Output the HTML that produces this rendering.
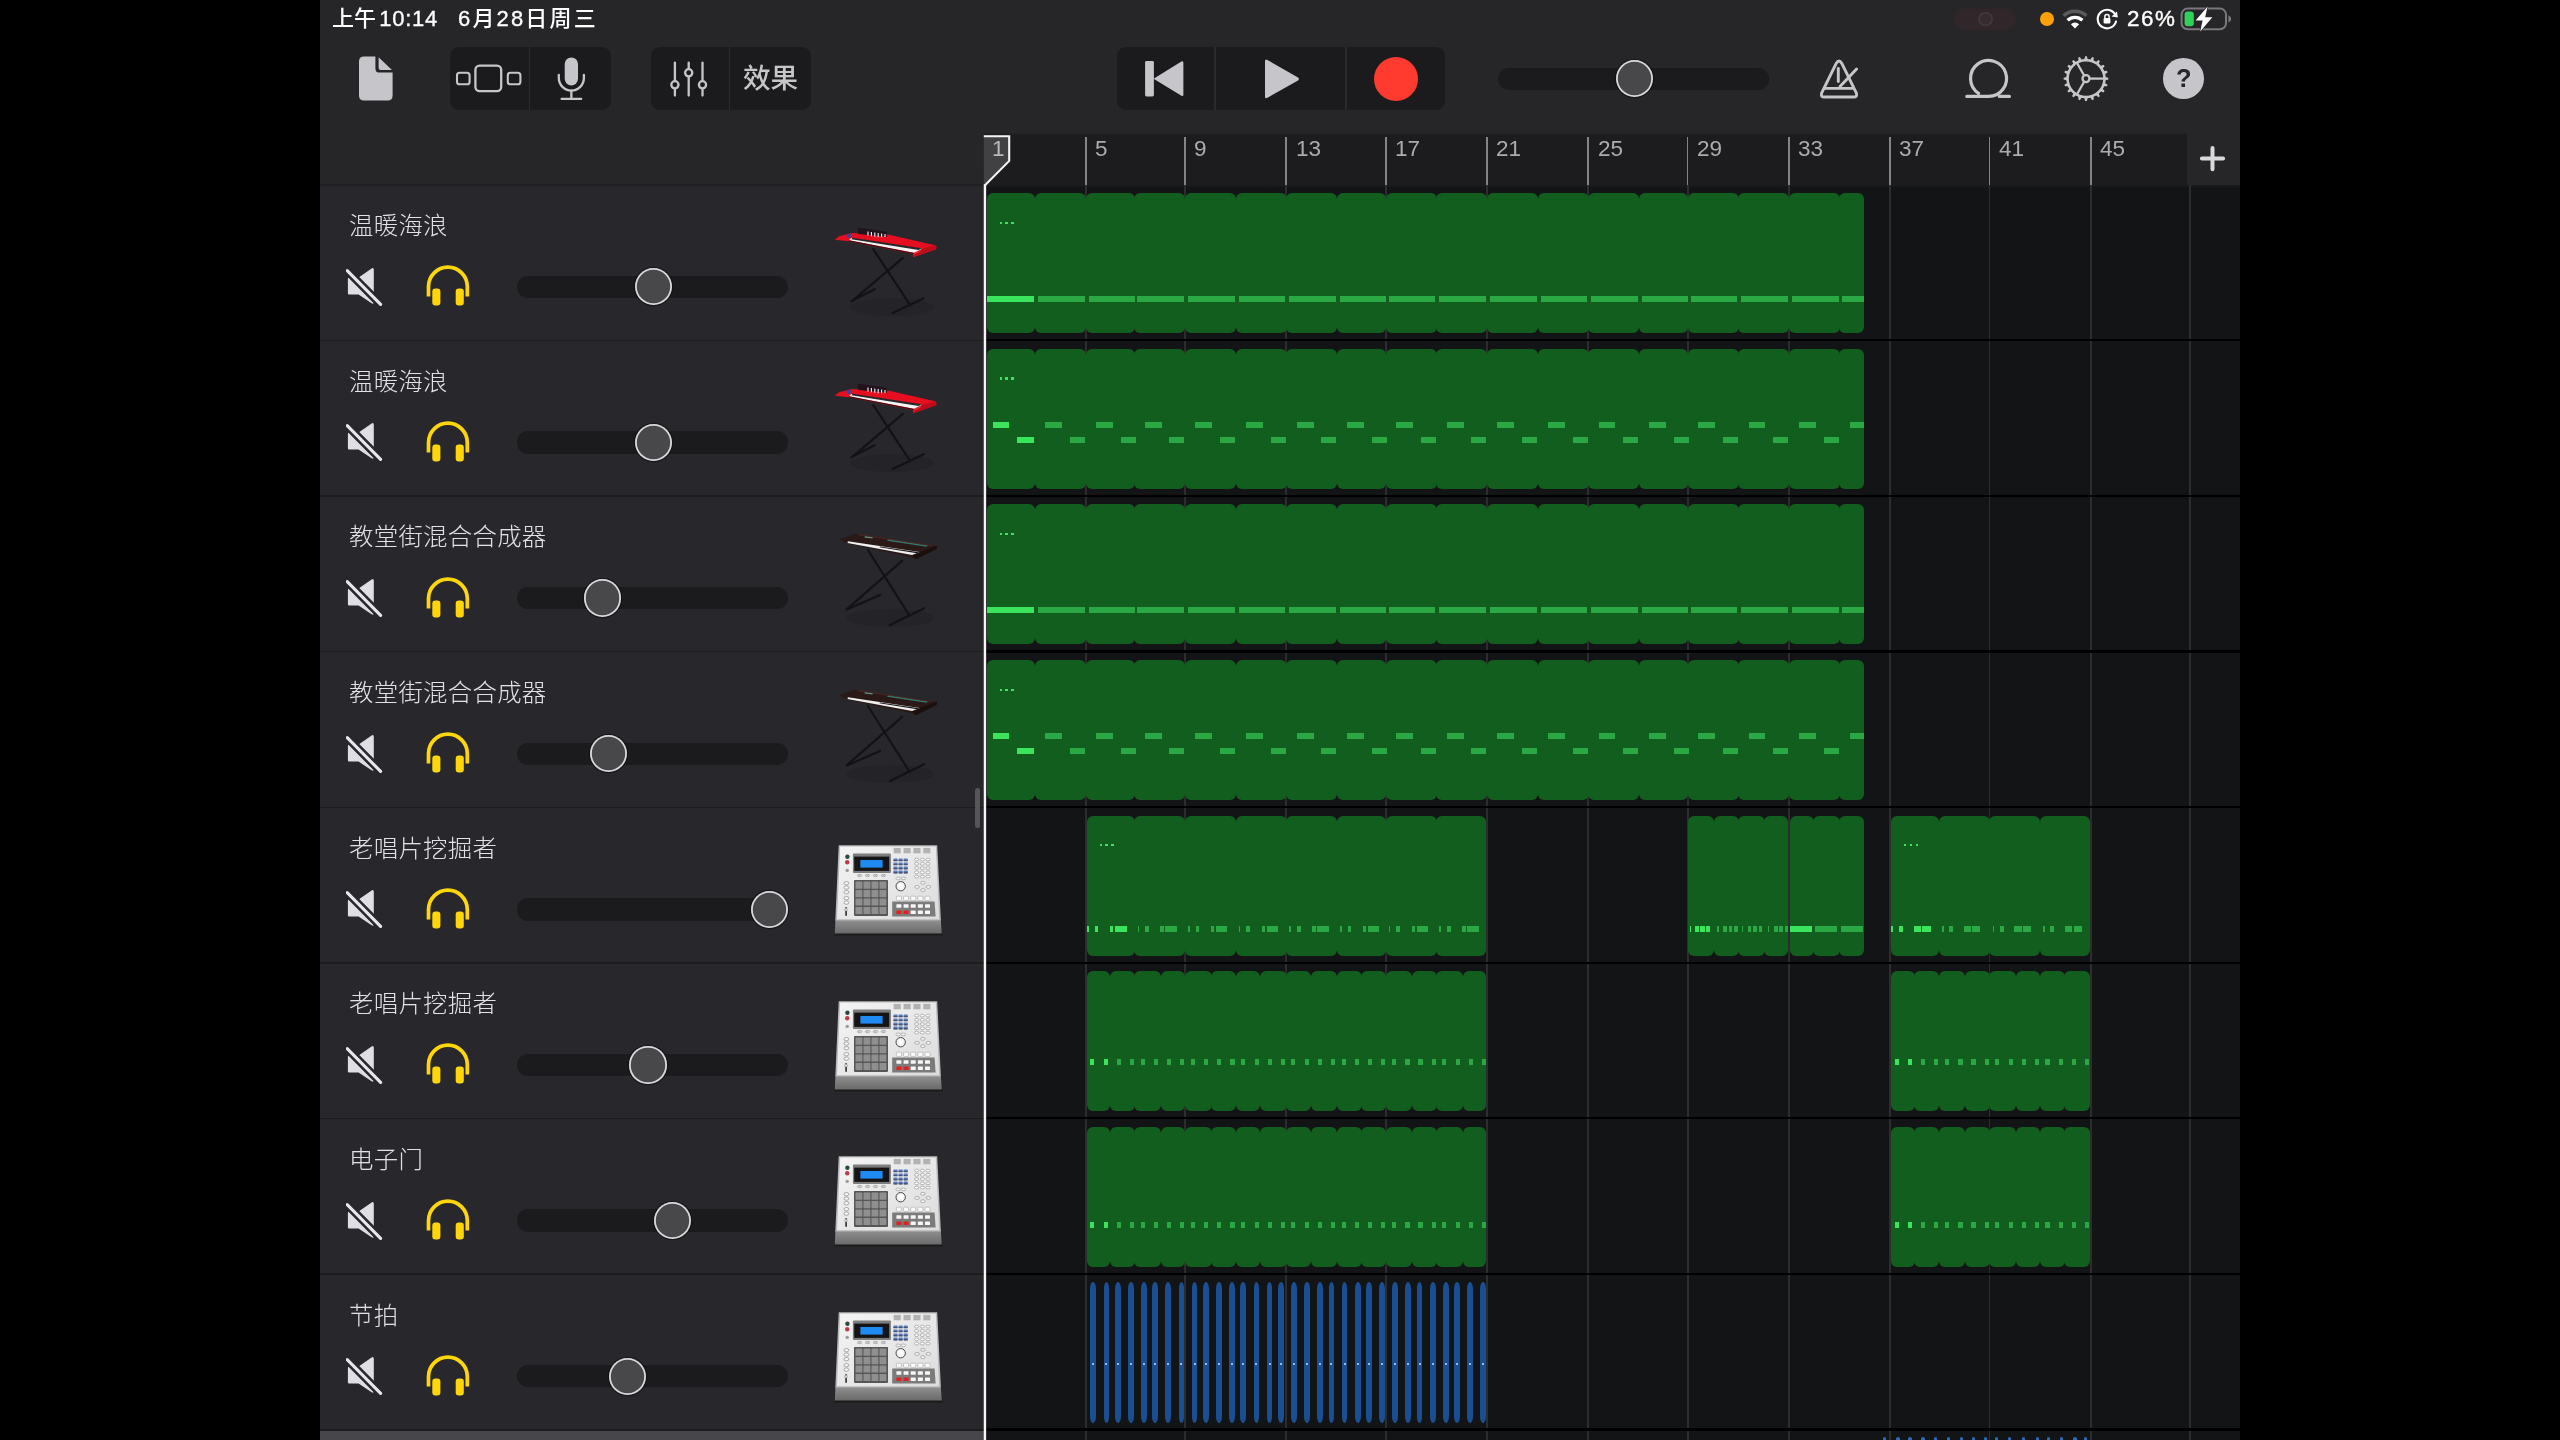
<!DOCTYPE html>
<html lang="zh-CN"><head><meta charset="utf-8"><title>GarageBand</title>
<style>
html,body{margin:0;padding:0;background:#000;}
body{width:2560px;height:1440px;overflow:hidden;position:relative;font-family:"Liberation Sans","Noto Sans CJK SC",sans-serif;}
#a div,#a svg,#a span{position:absolute;display:block;}
#a{position:absolute;left:0;top:0;width:2560px;height:1440px;overflow:hidden;}
.t{white-space:nowrap;line-height:1;will-change:transform;}
.seg{background:#115e1f;border-radius:5px;}
.n{background:#2aa843;}
.h{background:#3ae45c;}
.bl{background:#1a4f93;border-radius:2.9px / 7px;}
</style></head><body><div id="a">

<div style="left:320.00px;top:0.00px;width:1920.00px;height:1440.00px;background:#262628;"></div>
<div style="left:983.80px;top:133.00px;width:1256.20px;height:1307.00px;background:#131416;"></div>
<div style="left:983.80px;top:133.00px;width:1256.20px;height:52.00px;background:#1c1c1e;"></div>
<div style="left:983.80px;top:185.00px;width:1256.20px;height:3.00px;background:linear-gradient(#1c1c1e,#131416);"></div>
<div style="left:983.80px;top:131.80px;width:1256.20px;height:3.60px;background:linear-gradient(#29292b,#232325 40%,#1c1c1e);"></div>
<div style="left:2187.40px;top:133.00px;width:52.60px;height:52.00px;background:#262628;"></div>
<div style="left:320.00px;top:185.00px;width:663.80px;height:1255.00px;background:#28282c;"></div>
<div style="left:1084.85px;top:185.00px;width:1.80px;height:1255.00px;background:#2d2d30;"></div>
<div style="left:1184.23px;top:185.00px;width:1.80px;height:1255.00px;background:#2d2d30;"></div>
<div style="left:1285.48px;top:185.00px;width:1.80px;height:1255.00px;background:#2d2d30;"></div>
<div style="left:1384.85px;top:185.00px;width:1.80px;height:1255.00px;background:#2d2d30;"></div>
<div style="left:1486.10px;top:185.00px;width:1.80px;height:1255.00px;background:#2d2d30;"></div>
<div style="left:1587.35px;top:185.00px;width:1.80px;height:1255.00px;background:#2d2d30;"></div>
<div style="left:1686.73px;top:185.00px;width:1.80px;height:1255.00px;background:#2d2d30;"></div>
<div style="left:1787.98px;top:185.00px;width:1.80px;height:1255.00px;background:#2d2d30;"></div>
<div style="left:1889.23px;top:185.00px;width:1.80px;height:1255.00px;background:#2d2d30;"></div>
<div style="left:1988.60px;top:185.00px;width:1.80px;height:1255.00px;background:#2d2d30;"></div>
<div style="left:2089.85px;top:185.00px;width:1.80px;height:1255.00px;background:#2d2d30;"></div>
<div style="left:2189.22px;top:185.00px;width:1.80px;height:1255.00px;background:#2d2d30;"></div>
<div style="left:320.00px;top:184.33px;width:663.80px;height:1.30px;background:#1f1f22;"></div>
<div style="left:983.80px;top:339.06px;width:1256.20px;height:2.20px;background:#000;"></div>
<div style="left:320.00px;top:339.66px;width:663.80px;height:1.50px;background:#1c1c1f;"></div>
<div style="left:983.80px;top:494.69px;width:1256.20px;height:2.20px;background:#000;"></div>
<div style="left:320.00px;top:495.29px;width:663.80px;height:1.50px;background:#1c1c1f;"></div>
<div style="left:983.80px;top:650.32px;width:1256.20px;height:2.20px;background:#000;"></div>
<div style="left:320.00px;top:650.92px;width:663.80px;height:1.50px;background:#1c1c1f;"></div>
<div style="left:983.80px;top:805.95px;width:1256.20px;height:2.20px;background:#000;"></div>
<div style="left:320.00px;top:806.55px;width:663.80px;height:1.50px;background:#1c1c1f;"></div>
<div style="left:983.80px;top:961.58px;width:1256.20px;height:2.20px;background:#000;"></div>
<div style="left:320.00px;top:962.18px;width:663.80px;height:1.50px;background:#1c1c1f;"></div>
<div style="left:983.80px;top:1117.21px;width:1256.20px;height:2.20px;background:#000;"></div>
<div style="left:320.00px;top:1117.81px;width:663.80px;height:1.50px;background:#1c1c1f;"></div>
<div style="left:983.80px;top:1272.84px;width:1256.20px;height:2.20px;background:#000;"></div>
<div style="left:320.00px;top:1273.44px;width:663.80px;height:1.50px;background:#1c1c1f;"></div>
<div style="left:983.80px;top:1428.47px;width:1256.20px;height:2.20px;background:#000;"></div>
<div style="left:320.00px;top:1429.07px;width:663.80px;height:1.50px;background:#1c1c1f;"></div>
<div style="left:320.00px;top:1430.80px;width:663.80px;height:10.00px;background:#47474b;"></div>
<div style="left:1084.80px;top:136.60px;width:1.80px;height:48.40px;background:#848488;"></div>
<span class="t" style="left:1095.0px;top:137.5px;font-size:22.5px;color:#acacb0;">5</span>
<div style="left:1184.17px;top:136.60px;width:1.80px;height:48.40px;background:#848488;"></div>
<span class="t" style="left:1194.4px;top:137.5px;font-size:22.5px;color:#acacb0;">9</span>
<div style="left:1285.42px;top:136.60px;width:1.80px;height:48.40px;background:#848488;"></div>
<span class="t" style="left:1295.6px;top:137.5px;font-size:22.5px;color:#acacb0;">13</span>
<div style="left:1384.80px;top:136.60px;width:1.80px;height:48.40px;background:#848488;"></div>
<span class="t" style="left:1395.0px;top:137.5px;font-size:22.5px;color:#acacb0;">17</span>
<div style="left:1486.05px;top:136.60px;width:1.80px;height:48.40px;background:#848488;"></div>
<span class="t" style="left:1496.2px;top:137.5px;font-size:22.5px;color:#acacb0;">21</span>
<div style="left:1587.30px;top:136.60px;width:1.80px;height:48.40px;background:#848488;"></div>
<span class="t" style="left:1597.5px;top:137.5px;font-size:22.5px;color:#acacb0;">25</span>
<div style="left:1686.67px;top:136.60px;width:1.80px;height:48.40px;background:#848488;"></div>
<span class="t" style="left:1696.9px;top:137.5px;font-size:22.5px;color:#acacb0;">29</span>
<div style="left:1787.92px;top:136.60px;width:1.80px;height:48.40px;background:#848488;"></div>
<span class="t" style="left:1798.1px;top:137.5px;font-size:22.5px;color:#acacb0;">33</span>
<div style="left:1889.17px;top:136.60px;width:1.80px;height:48.40px;background:#848488;"></div>
<span class="t" style="left:1899.4px;top:137.5px;font-size:22.5px;color:#acacb0;">37</span>
<div style="left:1988.55px;top:136.60px;width:1.80px;height:48.40px;background:#848488;"></div>
<span class="t" style="left:1998.8px;top:137.5px;font-size:22.5px;color:#acacb0;">41</span>
<div style="left:2089.80px;top:136.60px;width:1.80px;height:48.40px;background:#848488;"></div>
<span class="t" style="left:2100.0px;top:137.5px;font-size:22.5px;color:#acacb0;">45</span>
<svg style="left:2196px;top:142px" width="34" height="34" viewBox="2196 142 34 34"><path d="M2212.5 147.9V169.3M2201.9 158.6H2223.1" stroke="#d9d9dd" stroke-width="4" stroke-linecap="round"/></svg>
<div class="seg" style="left:986.55px;top:193.03px;width:48.87px;height:140.2px;border-radius:6px 6px 6px 6px;"></div>
<div class="seg" style="left:1035.08px;top:193.03px;width:50.98px;height:140.2px;border-radius:6px 6px 6px 6px;"></div>
<div class="seg" style="left:1085.70px;top:193.03px;width:49.10px;height:140.2px;border-radius:6px 6px 6px 6px;"></div>
<div class="seg" style="left:1134.45px;top:193.03px;width:50.98px;height:140.2px;border-radius:6px 6px 6px 6px;"></div>
<div class="seg" style="left:1185.08px;top:193.03px;width:50.98px;height:140.2px;border-radius:6px 6px 6px 6px;"></div>
<div class="seg" style="left:1235.70px;top:193.03px;width:50.98px;height:140.2px;border-radius:6px 6px 6px 6px;"></div>
<div class="seg" style="left:1286.33px;top:193.03px;width:50.98px;height:140.2px;border-radius:6px 6px 6px 6px;"></div>
<div class="seg" style="left:1336.95px;top:193.03px;width:49.10px;height:140.2px;border-radius:6px 6px 6px 6px;"></div>
<div class="seg" style="left:1385.70px;top:193.03px;width:50.98px;height:140.2px;border-radius:6px 6px 6px 6px;"></div>
<div class="seg" style="left:1436.33px;top:193.03px;width:50.98px;height:140.2px;border-radius:6px 6px 6px 6px;"></div>
<div class="seg" style="left:1486.95px;top:193.03px;width:50.98px;height:140.2px;border-radius:6px 6px 6px 6px;"></div>
<div class="seg" style="left:1537.58px;top:193.03px;width:50.98px;height:140.2px;border-radius:6px 6px 6px 6px;"></div>
<div class="seg" style="left:1588.20px;top:193.03px;width:50.98px;height:140.2px;border-radius:6px 6px 6px 6px;"></div>
<div class="seg" style="left:1638.83px;top:193.03px;width:49.10px;height:140.2px;border-radius:6px 6px 6px 6px;"></div>
<div class="seg" style="left:1687.58px;top:193.03px;width:50.98px;height:140.2px;border-radius:6px 6px 6px 6px;"></div>
<div class="seg" style="left:1738.20px;top:193.03px;width:50.98px;height:140.2px;border-radius:6px 6px 6px 6px;"></div>
<div class="seg" style="left:1788.83px;top:193.03px;width:50.98px;height:140.2px;border-radius:6px 6px 6px 6px;"></div>
<div class="seg" style="left:1839.45px;top:193.03px;width:24.13px;height:140.2px;border-radius:6px 6px 6px 6px;"></div>
<div style="left:999.55px;top:221.63px;width:2.30px;height:2.30px;background:#3fe063;"></div>
<div style="left:1005.45px;top:221.63px;width:2.30px;height:2.30px;background:#3fe063;"></div>
<div style="left:1011.35px;top:221.63px;width:2.30px;height:2.30px;background:#3fe063;"></div>
<div class="h" style="left:986.55px;top:296.23px;width:47.70px;height:5.80px"></div>
<div class="n" style="left:1038.08px;top:296.23px;width:46.70px;height:5.80px"></div>
<div class="n" style="left:1088.70px;top:296.23px;width:46.15px;height:5.80px"></div>
<div class="n" style="left:1137.45px;top:296.23px;width:46.70px;height:5.80px"></div>
<div class="n" style="left:1188.08px;top:296.23px;width:46.70px;height:5.80px"></div>
<div class="n" style="left:1238.70px;top:296.23px;width:46.70px;height:5.80px"></div>
<div class="n" style="left:1289.33px;top:296.23px;width:46.70px;height:5.80px"></div>
<div class="n" style="left:1339.95px;top:296.23px;width:46.15px;height:5.80px"></div>
<div class="n" style="left:1388.70px;top:296.23px;width:46.70px;height:5.80px"></div>
<div class="n" style="left:1439.33px;top:296.23px;width:46.70px;height:5.80px"></div>
<div class="n" style="left:1489.95px;top:296.23px;width:46.70px;height:5.80px"></div>
<div class="n" style="left:1540.58px;top:296.23px;width:46.70px;height:5.80px"></div>
<div class="n" style="left:1591.20px;top:296.23px;width:46.70px;height:5.80px"></div>
<div class="n" style="left:1641.83px;top:296.23px;width:46.15px;height:5.80px"></div>
<div class="n" style="left:1690.58px;top:296.23px;width:46.70px;height:5.80px"></div>
<div class="n" style="left:1741.20px;top:296.23px;width:46.70px;height:5.80px"></div>
<div class="n" style="left:1791.83px;top:296.23px;width:46.70px;height:5.80px"></div>
<div class="n" style="left:1842.45px;top:296.23px;width:21.18px;height:5.80px"></div>
<div class="seg" style="left:986.55px;top:348.66px;width:48.87px;height:140.2px;border-radius:6px 6px 6px 6px;"></div>
<div class="seg" style="left:1035.08px;top:348.66px;width:50.98px;height:140.2px;border-radius:6px 6px 6px 6px;"></div>
<div class="seg" style="left:1085.70px;top:348.66px;width:49.10px;height:140.2px;border-radius:6px 6px 6px 6px;"></div>
<div class="seg" style="left:1134.45px;top:348.66px;width:50.98px;height:140.2px;border-radius:6px 6px 6px 6px;"></div>
<div class="seg" style="left:1185.08px;top:348.66px;width:50.98px;height:140.2px;border-radius:6px 6px 6px 6px;"></div>
<div class="seg" style="left:1235.70px;top:348.66px;width:50.98px;height:140.2px;border-radius:6px 6px 6px 6px;"></div>
<div class="seg" style="left:1286.33px;top:348.66px;width:50.98px;height:140.2px;border-radius:6px 6px 6px 6px;"></div>
<div class="seg" style="left:1336.95px;top:348.66px;width:49.10px;height:140.2px;border-radius:6px 6px 6px 6px;"></div>
<div class="seg" style="left:1385.70px;top:348.66px;width:50.98px;height:140.2px;border-radius:6px 6px 6px 6px;"></div>
<div class="seg" style="left:1436.33px;top:348.66px;width:50.98px;height:140.2px;border-radius:6px 6px 6px 6px;"></div>
<div class="seg" style="left:1486.95px;top:348.66px;width:50.98px;height:140.2px;border-radius:6px 6px 6px 6px;"></div>
<div class="seg" style="left:1537.58px;top:348.66px;width:50.98px;height:140.2px;border-radius:6px 6px 6px 6px;"></div>
<div class="seg" style="left:1588.20px;top:348.66px;width:50.98px;height:140.2px;border-radius:6px 6px 6px 6px;"></div>
<div class="seg" style="left:1638.83px;top:348.66px;width:49.10px;height:140.2px;border-radius:6px 6px 6px 6px;"></div>
<div class="seg" style="left:1687.58px;top:348.66px;width:50.98px;height:140.2px;border-radius:6px 6px 6px 6px;"></div>
<div class="seg" style="left:1738.20px;top:348.66px;width:50.98px;height:140.2px;border-radius:6px 6px 6px 6px;"></div>
<div class="seg" style="left:1788.83px;top:348.66px;width:50.98px;height:140.2px;border-radius:6px 6px 6px 6px;"></div>
<div class="seg" style="left:1839.45px;top:348.66px;width:24.13px;height:140.2px;border-radius:6px 6px 6px 6px;"></div>
<div style="left:999.55px;top:377.26px;width:2.30px;height:2.30px;background:#3fe063;"></div>
<div style="left:1005.45px;top:377.26px;width:2.30px;height:2.30px;background:#3fe063;"></div>
<div style="left:1011.35px;top:377.26px;width:2.30px;height:2.30px;background:#3fe063;"></div>
<div class="h" style="left:992.75px;top:422.06px;width:16.60px;height:5.80px"></div>
<div class="h" style="left:1017.15px;top:436.96px;width:17.00px;height:5.80px"></div>
<div class="n" style="left:1045.48px;top:422.06px;width:16.80px;height:5.80px"></div>
<div class="n" style="left:1070.08px;top:436.96px;width:15.00px;height:5.80px"></div>
<div class="n" style="left:1096.10px;top:422.06px;width:16.80px;height:5.80px"></div>
<div class="n" style="left:1120.70px;top:436.96px;width:15.00px;height:5.80px"></div>
<div class="n" style="left:1144.85px;top:422.06px;width:16.80px;height:5.80px"></div>
<div class="n" style="left:1169.45px;top:436.96px;width:15.00px;height:5.80px"></div>
<div class="n" style="left:1195.48px;top:422.06px;width:16.80px;height:5.80px"></div>
<div class="n" style="left:1220.08px;top:436.96px;width:15.00px;height:5.80px"></div>
<div class="n" style="left:1246.10px;top:422.06px;width:16.80px;height:5.80px"></div>
<div class="n" style="left:1270.70px;top:436.96px;width:15.00px;height:5.80px"></div>
<div class="n" style="left:1296.73px;top:422.06px;width:16.80px;height:5.80px"></div>
<div class="n" style="left:1321.33px;top:436.96px;width:15.00px;height:5.80px"></div>
<div class="n" style="left:1347.35px;top:422.06px;width:16.80px;height:5.80px"></div>
<div class="n" style="left:1371.95px;top:436.96px;width:15.00px;height:5.80px"></div>
<div class="n" style="left:1396.10px;top:422.06px;width:16.80px;height:5.80px"></div>
<div class="n" style="left:1420.70px;top:436.96px;width:15.00px;height:5.80px"></div>
<div class="n" style="left:1446.73px;top:422.06px;width:16.80px;height:5.80px"></div>
<div class="n" style="left:1471.33px;top:436.96px;width:15.00px;height:5.80px"></div>
<div class="n" style="left:1497.35px;top:422.06px;width:16.80px;height:5.80px"></div>
<div class="n" style="left:1521.95px;top:436.96px;width:15.00px;height:5.80px"></div>
<div class="n" style="left:1547.98px;top:422.06px;width:16.80px;height:5.80px"></div>
<div class="n" style="left:1572.58px;top:436.96px;width:15.00px;height:5.80px"></div>
<div class="n" style="left:1598.60px;top:422.06px;width:16.80px;height:5.80px"></div>
<div class="n" style="left:1623.20px;top:436.96px;width:15.00px;height:5.80px"></div>
<div class="n" style="left:1649.23px;top:422.06px;width:16.80px;height:5.80px"></div>
<div class="n" style="left:1673.83px;top:436.96px;width:15.00px;height:5.80px"></div>
<div class="n" style="left:1697.98px;top:422.06px;width:16.80px;height:5.80px"></div>
<div class="n" style="left:1722.58px;top:436.96px;width:15.00px;height:5.80px"></div>
<div class="n" style="left:1748.60px;top:422.06px;width:16.80px;height:5.80px"></div>
<div class="n" style="left:1773.20px;top:436.96px;width:15.00px;height:5.80px"></div>
<div class="n" style="left:1799.23px;top:422.06px;width:16.80px;height:5.80px"></div>
<div class="n" style="left:1823.83px;top:436.96px;width:15.00px;height:5.80px"></div>
<div class="n" style="left:1849.85px;top:422.06px;width:13.78px;height:5.80px"></div>
<div class="seg" style="left:986.55px;top:504.29px;width:48.87px;height:140.2px;border-radius:6px 6px 6px 6px;"></div>
<div class="seg" style="left:1035.08px;top:504.29px;width:50.98px;height:140.2px;border-radius:6px 6px 6px 6px;"></div>
<div class="seg" style="left:1085.70px;top:504.29px;width:49.10px;height:140.2px;border-radius:6px 6px 6px 6px;"></div>
<div class="seg" style="left:1134.45px;top:504.29px;width:50.98px;height:140.2px;border-radius:6px 6px 6px 6px;"></div>
<div class="seg" style="left:1185.08px;top:504.29px;width:50.98px;height:140.2px;border-radius:6px 6px 6px 6px;"></div>
<div class="seg" style="left:1235.70px;top:504.29px;width:50.98px;height:140.2px;border-radius:6px 6px 6px 6px;"></div>
<div class="seg" style="left:1286.33px;top:504.29px;width:50.98px;height:140.2px;border-radius:6px 6px 6px 6px;"></div>
<div class="seg" style="left:1336.95px;top:504.29px;width:49.10px;height:140.2px;border-radius:6px 6px 6px 6px;"></div>
<div class="seg" style="left:1385.70px;top:504.29px;width:50.98px;height:140.2px;border-radius:6px 6px 6px 6px;"></div>
<div class="seg" style="left:1436.33px;top:504.29px;width:50.98px;height:140.2px;border-radius:6px 6px 6px 6px;"></div>
<div class="seg" style="left:1486.95px;top:504.29px;width:50.98px;height:140.2px;border-radius:6px 6px 6px 6px;"></div>
<div class="seg" style="left:1537.58px;top:504.29px;width:50.98px;height:140.2px;border-radius:6px 6px 6px 6px;"></div>
<div class="seg" style="left:1588.20px;top:504.29px;width:50.98px;height:140.2px;border-radius:6px 6px 6px 6px;"></div>
<div class="seg" style="left:1638.83px;top:504.29px;width:49.10px;height:140.2px;border-radius:6px 6px 6px 6px;"></div>
<div class="seg" style="left:1687.58px;top:504.29px;width:50.98px;height:140.2px;border-radius:6px 6px 6px 6px;"></div>
<div class="seg" style="left:1738.20px;top:504.29px;width:50.98px;height:140.2px;border-radius:6px 6px 6px 6px;"></div>
<div class="seg" style="left:1788.83px;top:504.29px;width:50.98px;height:140.2px;border-radius:6px 6px 6px 6px;"></div>
<div class="seg" style="left:1839.45px;top:504.29px;width:24.13px;height:140.2px;border-radius:6px 6px 6px 6px;"></div>
<div style="left:999.55px;top:532.89px;width:2.30px;height:2.30px;background:#3fe063;"></div>
<div style="left:1005.45px;top:532.89px;width:2.30px;height:2.30px;background:#3fe063;"></div>
<div style="left:1011.35px;top:532.89px;width:2.30px;height:2.30px;background:#3fe063;"></div>
<div class="h" style="left:986.55px;top:607.49px;width:47.70px;height:5.80px"></div>
<div class="n" style="left:1038.08px;top:607.49px;width:46.70px;height:5.80px"></div>
<div class="n" style="left:1088.70px;top:607.49px;width:46.15px;height:5.80px"></div>
<div class="n" style="left:1137.45px;top:607.49px;width:46.70px;height:5.80px"></div>
<div class="n" style="left:1188.08px;top:607.49px;width:46.70px;height:5.80px"></div>
<div class="n" style="left:1238.70px;top:607.49px;width:46.70px;height:5.80px"></div>
<div class="n" style="left:1289.33px;top:607.49px;width:46.70px;height:5.80px"></div>
<div class="n" style="left:1339.95px;top:607.49px;width:46.15px;height:5.80px"></div>
<div class="n" style="left:1388.70px;top:607.49px;width:46.70px;height:5.80px"></div>
<div class="n" style="left:1439.33px;top:607.49px;width:46.70px;height:5.80px"></div>
<div class="n" style="left:1489.95px;top:607.49px;width:46.70px;height:5.80px"></div>
<div class="n" style="left:1540.58px;top:607.49px;width:46.70px;height:5.80px"></div>
<div class="n" style="left:1591.20px;top:607.49px;width:46.70px;height:5.80px"></div>
<div class="n" style="left:1641.83px;top:607.49px;width:46.15px;height:5.80px"></div>
<div class="n" style="left:1690.58px;top:607.49px;width:46.70px;height:5.80px"></div>
<div class="n" style="left:1741.20px;top:607.49px;width:46.70px;height:5.80px"></div>
<div class="n" style="left:1791.83px;top:607.49px;width:46.70px;height:5.80px"></div>
<div class="n" style="left:1842.45px;top:607.49px;width:21.18px;height:5.80px"></div>
<div class="seg" style="left:986.55px;top:659.92px;width:48.87px;height:140.2px;border-radius:6px 6px 6px 6px;"></div>
<div class="seg" style="left:1035.08px;top:659.92px;width:50.98px;height:140.2px;border-radius:6px 6px 6px 6px;"></div>
<div class="seg" style="left:1085.70px;top:659.92px;width:49.10px;height:140.2px;border-radius:6px 6px 6px 6px;"></div>
<div class="seg" style="left:1134.45px;top:659.92px;width:50.98px;height:140.2px;border-radius:6px 6px 6px 6px;"></div>
<div class="seg" style="left:1185.08px;top:659.92px;width:50.98px;height:140.2px;border-radius:6px 6px 6px 6px;"></div>
<div class="seg" style="left:1235.70px;top:659.92px;width:50.98px;height:140.2px;border-radius:6px 6px 6px 6px;"></div>
<div class="seg" style="left:1286.33px;top:659.92px;width:50.98px;height:140.2px;border-radius:6px 6px 6px 6px;"></div>
<div class="seg" style="left:1336.95px;top:659.92px;width:49.10px;height:140.2px;border-radius:6px 6px 6px 6px;"></div>
<div class="seg" style="left:1385.70px;top:659.92px;width:50.98px;height:140.2px;border-radius:6px 6px 6px 6px;"></div>
<div class="seg" style="left:1436.33px;top:659.92px;width:50.98px;height:140.2px;border-radius:6px 6px 6px 6px;"></div>
<div class="seg" style="left:1486.95px;top:659.92px;width:50.98px;height:140.2px;border-radius:6px 6px 6px 6px;"></div>
<div class="seg" style="left:1537.58px;top:659.92px;width:50.98px;height:140.2px;border-radius:6px 6px 6px 6px;"></div>
<div class="seg" style="left:1588.20px;top:659.92px;width:50.98px;height:140.2px;border-radius:6px 6px 6px 6px;"></div>
<div class="seg" style="left:1638.83px;top:659.92px;width:49.10px;height:140.2px;border-radius:6px 6px 6px 6px;"></div>
<div class="seg" style="left:1687.58px;top:659.92px;width:50.98px;height:140.2px;border-radius:6px 6px 6px 6px;"></div>
<div class="seg" style="left:1738.20px;top:659.92px;width:50.98px;height:140.2px;border-radius:6px 6px 6px 6px;"></div>
<div class="seg" style="left:1788.83px;top:659.92px;width:50.98px;height:140.2px;border-radius:6px 6px 6px 6px;"></div>
<div class="seg" style="left:1839.45px;top:659.92px;width:24.13px;height:140.2px;border-radius:6px 6px 6px 6px;"></div>
<div style="left:999.55px;top:688.52px;width:2.30px;height:2.30px;background:#3fe063;"></div>
<div style="left:1005.45px;top:688.52px;width:2.30px;height:2.30px;background:#3fe063;"></div>
<div style="left:1011.35px;top:688.52px;width:2.30px;height:2.30px;background:#3fe063;"></div>
<div class="h" style="left:992.75px;top:733.32px;width:16.60px;height:5.80px"></div>
<div class="h" style="left:1017.15px;top:748.22px;width:17.00px;height:5.80px"></div>
<div class="n" style="left:1045.48px;top:733.32px;width:16.80px;height:5.80px"></div>
<div class="n" style="left:1070.08px;top:748.22px;width:15.00px;height:5.80px"></div>
<div class="n" style="left:1096.10px;top:733.32px;width:16.80px;height:5.80px"></div>
<div class="n" style="left:1120.70px;top:748.22px;width:15.00px;height:5.80px"></div>
<div class="n" style="left:1144.85px;top:733.32px;width:16.80px;height:5.80px"></div>
<div class="n" style="left:1169.45px;top:748.22px;width:15.00px;height:5.80px"></div>
<div class="n" style="left:1195.48px;top:733.32px;width:16.80px;height:5.80px"></div>
<div class="n" style="left:1220.08px;top:748.22px;width:15.00px;height:5.80px"></div>
<div class="n" style="left:1246.10px;top:733.32px;width:16.80px;height:5.80px"></div>
<div class="n" style="left:1270.70px;top:748.22px;width:15.00px;height:5.80px"></div>
<div class="n" style="left:1296.73px;top:733.32px;width:16.80px;height:5.80px"></div>
<div class="n" style="left:1321.33px;top:748.22px;width:15.00px;height:5.80px"></div>
<div class="n" style="left:1347.35px;top:733.32px;width:16.80px;height:5.80px"></div>
<div class="n" style="left:1371.95px;top:748.22px;width:15.00px;height:5.80px"></div>
<div class="n" style="left:1396.10px;top:733.32px;width:16.80px;height:5.80px"></div>
<div class="n" style="left:1420.70px;top:748.22px;width:15.00px;height:5.80px"></div>
<div class="n" style="left:1446.73px;top:733.32px;width:16.80px;height:5.80px"></div>
<div class="n" style="left:1471.33px;top:748.22px;width:15.00px;height:5.80px"></div>
<div class="n" style="left:1497.35px;top:733.32px;width:16.80px;height:5.80px"></div>
<div class="n" style="left:1521.95px;top:748.22px;width:15.00px;height:5.80px"></div>
<div class="n" style="left:1547.98px;top:733.32px;width:16.80px;height:5.80px"></div>
<div class="n" style="left:1572.58px;top:748.22px;width:15.00px;height:5.80px"></div>
<div class="n" style="left:1598.60px;top:733.32px;width:16.80px;height:5.80px"></div>
<div class="n" style="left:1623.20px;top:748.22px;width:15.00px;height:5.80px"></div>
<div class="n" style="left:1649.23px;top:733.32px;width:16.80px;height:5.80px"></div>
<div class="n" style="left:1673.83px;top:748.22px;width:15.00px;height:5.80px"></div>
<div class="n" style="left:1697.98px;top:733.32px;width:16.80px;height:5.80px"></div>
<div class="n" style="left:1722.58px;top:748.22px;width:15.00px;height:5.80px"></div>
<div class="n" style="left:1748.60px;top:733.32px;width:16.80px;height:5.80px"></div>
<div class="n" style="left:1773.20px;top:748.22px;width:15.00px;height:5.80px"></div>
<div class="n" style="left:1799.23px;top:733.32px;width:16.80px;height:5.80px"></div>
<div class="n" style="left:1823.83px;top:748.22px;width:15.00px;height:5.80px"></div>
<div class="n" style="left:1849.85px;top:733.32px;width:13.78px;height:5.80px"></div>
<div class="seg" style="left:1086.50px;top:815.55px;width:48.30px;height:140.2px;border-radius:6px 6px 6px 6px;"></div>
<div class="seg" style="left:1134.45px;top:815.55px;width:50.98px;height:140.2px;border-radius:6px 6px 6px 6px;"></div>
<div class="seg" style="left:1185.08px;top:815.55px;width:50.98px;height:140.2px;border-radius:6px 6px 6px 6px;"></div>
<div class="seg" style="left:1235.70px;top:815.55px;width:50.98px;height:140.2px;border-radius:6px 6px 6px 6px;"></div>
<div class="seg" style="left:1286.33px;top:815.55px;width:50.98px;height:140.2px;border-radius:6px 6px 6px 6px;"></div>
<div class="seg" style="left:1336.95px;top:815.55px;width:49.10px;height:140.2px;border-radius:6px 6px 6px 6px;"></div>
<div class="seg" style="left:1385.70px;top:815.55px;width:50.98px;height:140.2px;border-radius:6px 6px 6px 6px;"></div>
<div class="seg" style="left:1436.33px;top:815.55px;width:50.07px;height:140.2px;border-radius:6px 6px 6px 6px;"></div>
<div style="left:1099.50px;top:844.15px;width:2.30px;height:2.30px;background:#3fe063;"></div>
<div style="left:1105.40px;top:844.15px;width:2.30px;height:2.30px;background:#3fe063;"></div>
<div style="left:1111.30px;top:844.15px;width:2.30px;height:2.30px;background:#3fe063;"></div>
<div class="h" style="left:1087.10px;top:925.95px;width:2.00px;height:6.40px"></div>
<div class="h" style="left:1094.50px;top:925.95px;width:3.90px;height:6.40px"></div>
<div class="h" style="left:1109.50px;top:925.95px;width:3.90px;height:6.40px"></div>
<div class="h" style="left:1115.20px;top:925.95px;width:11.80px;height:6.40px"></div>
<div class="n" style="left:1137.55px;top:925.95px;width:1.60px;height:6.40px"></div>
<div class="n" style="left:1145.05px;top:925.95px;width:3.80px;height:6.40px"></div>
<div class="n" style="left:1160.25px;top:925.95px;width:3.60px;height:6.40px"></div>
<div class="n" style="left:1165.45px;top:925.95px;width:11.40px;height:6.40px"></div>
<div class="n" style="left:1188.17px;top:925.95px;width:1.60px;height:6.40px"></div>
<div class="n" style="left:1195.67px;top:925.95px;width:3.80px;height:6.40px"></div>
<div class="n" style="left:1210.88px;top:925.95px;width:3.60px;height:6.40px"></div>
<div class="n" style="left:1216.08px;top:925.95px;width:11.40px;height:6.40px"></div>
<div class="n" style="left:1238.80px;top:925.95px;width:1.60px;height:6.40px"></div>
<div class="n" style="left:1246.30px;top:925.95px;width:3.80px;height:6.40px"></div>
<div class="n" style="left:1261.50px;top:925.95px;width:3.60px;height:6.40px"></div>
<div class="n" style="left:1266.70px;top:925.95px;width:11.40px;height:6.40px"></div>
<div class="n" style="left:1289.42px;top:925.95px;width:1.60px;height:6.40px"></div>
<div class="n" style="left:1296.92px;top:925.95px;width:3.80px;height:6.40px"></div>
<div class="n" style="left:1312.12px;top:925.95px;width:3.60px;height:6.40px"></div>
<div class="n" style="left:1317.33px;top:925.95px;width:11.40px;height:6.40px"></div>
<div class="n" style="left:1340.05px;top:925.95px;width:1.60px;height:6.40px"></div>
<div class="n" style="left:1347.55px;top:925.95px;width:3.80px;height:6.40px"></div>
<div class="n" style="left:1362.75px;top:925.95px;width:3.60px;height:6.40px"></div>
<div class="n" style="left:1367.95px;top:925.95px;width:11.40px;height:6.40px"></div>
<div class="n" style="left:1388.80px;top:925.95px;width:1.60px;height:6.40px"></div>
<div class="n" style="left:1396.30px;top:925.95px;width:3.80px;height:6.40px"></div>
<div class="n" style="left:1411.50px;top:925.95px;width:3.60px;height:6.40px"></div>
<div class="n" style="left:1416.70px;top:925.95px;width:11.40px;height:6.40px"></div>
<div class="n" style="left:1439.42px;top:925.95px;width:1.60px;height:6.40px"></div>
<div class="n" style="left:1446.92px;top:925.95px;width:3.80px;height:6.40px"></div>
<div class="n" style="left:1462.12px;top:925.95px;width:3.60px;height:6.40px"></div>
<div class="n" style="left:1467.33px;top:925.95px;width:11.40px;height:6.40px"></div>
<div class="seg" style="left:1688.38px;top:815.55px;width:25.80px;height:140.2px;border-radius:6px 6px 6px 6px;"></div>
<div class="seg" style="left:1713.83px;top:815.55px;width:24.73px;height:140.2px;border-radius:6px 6px 6px 6px;"></div>
<div class="seg" style="left:1738.20px;top:815.55px;width:26.60px;height:140.2px;border-radius:6px 6px 6px 6px;"></div>
<div class="seg" style="left:1764.45px;top:815.55px;width:23.82px;height:140.2px;border-radius:6px 6px 6px 6px;"></div>
<div class="h" style="left:1689.58px;top:925.95px;width:1.70px;height:6.40px"></div>
<div class="h" style="left:1694.88px;top:925.95px;width:4.10px;height:6.40px"></div>
<div class="h" style="left:1700.47px;top:925.95px;width:4.10px;height:6.40px"></div>
<div class="h" style="left:1706.08px;top:925.95px;width:4.10px;height:6.40px"></div>
<div class="n" style="left:1717.33px;top:925.95px;width:1.50px;height:6.40px"></div>
<div class="n" style="left:1723.33px;top:925.95px;width:3.60px;height:6.40px"></div>
<div class="n" style="left:1728.83px;top:925.95px;width:3.60px;height:6.40px"></div>
<div class="n" style="left:1734.23px;top:925.95px;width:3.40px;height:6.40px"></div>
<div class="n" style="left:1741.70px;top:925.95px;width:1.50px;height:6.40px"></div>
<div class="n" style="left:1747.70px;top:925.95px;width:3.60px;height:6.40px"></div>
<div class="n" style="left:1753.20px;top:925.95px;width:3.60px;height:6.40px"></div>
<div class="n" style="left:1758.60px;top:925.95px;width:3.40px;height:6.40px"></div>
<div class="n" style="left:1767.95px;top:925.95px;width:1.50px;height:6.40px"></div>
<div class="n" style="left:1773.95px;top:925.95px;width:3.60px;height:6.40px"></div>
<div class="n" style="left:1779.45px;top:925.95px;width:3.60px;height:6.40px"></div>
<div class="n" style="left:1784.85px;top:925.95px;width:3.40px;height:6.40px"></div>
<div class="seg" style="left:1789.62px;top:815.55px;width:23.93px;height:140.2px;border-radius:6px 6px 6px 6px;"></div>
<div class="seg" style="left:1813.20px;top:815.55px;width:26.60px;height:140.2px;border-radius:6px 6px 6px 6px;"></div>
<div class="seg" style="left:1839.45px;top:815.55px;width:24.13px;height:140.2px;border-radius:6px 6px 6px 6px;"></div>
<div class="h" style="left:1790.03px;top:925.95px;width:22.40px;height:6.40px"></div>
<div class="n" style="left:1814.80px;top:925.95px;width:22.30px;height:6.40px"></div>
<div class="n" style="left:1841.05px;top:925.95px;width:22.18px;height:6.40px"></div>
<div class="seg" style="left:1890.88px;top:815.55px;width:48.30px;height:140.2px;border-radius:6px 6px 6px 6px;"></div>
<div class="seg" style="left:1938.83px;top:815.55px;width:50.98px;height:140.2px;border-radius:6px 6px 6px 6px;"></div>
<div class="seg" style="left:1989.45px;top:815.55px;width:50.98px;height:140.2px;border-radius:6px 6px 6px 6px;"></div>
<div class="seg" style="left:2040.08px;top:815.55px;width:50.07px;height:140.2px;border-radius:6px 6px 6px 6px;"></div>
<div style="left:1903.88px;top:844.15px;width:2.30px;height:2.30px;background:#3fe063;"></div>
<div style="left:1909.78px;top:844.15px;width:2.30px;height:2.30px;background:#3fe063;"></div>
<div style="left:1915.67px;top:844.15px;width:2.30px;height:2.30px;background:#3fe063;"></div>
<div class="h" style="left:1891.08px;top:925.95px;width:2.00px;height:6.40px"></div>
<div class="h" style="left:1898.58px;top:925.95px;width:4.10px;height:6.40px"></div>
<div class="h" style="left:1913.58px;top:925.95px;width:7.30px;height:6.40px"></div>
<div class="h" style="left:1922.08px;top:925.95px;width:8.50px;height:6.40px"></div>
<div class="n" style="left:1941.92px;top:925.95px;width:1.60px;height:6.40px"></div>
<div class="n" style="left:1949.23px;top:925.95px;width:3.90px;height:6.40px"></div>
<div class="n" style="left:1963.62px;top:925.95px;width:7.60px;height:6.40px"></div>
<div class="n" style="left:1972.42px;top:925.95px;width:8.00px;height:6.40px"></div>
<div class="n" style="left:1992.55px;top:925.95px;width:1.60px;height:6.40px"></div>
<div class="n" style="left:1999.85px;top:925.95px;width:3.90px;height:6.40px"></div>
<div class="n" style="left:2014.25px;top:925.95px;width:7.60px;height:6.40px"></div>
<div class="n" style="left:2023.05px;top:925.95px;width:8.00px;height:6.40px"></div>
<div class="n" style="left:2043.17px;top:925.95px;width:1.60px;height:6.40px"></div>
<div class="n" style="left:2050.47px;top:925.95px;width:3.90px;height:6.40px"></div>
<div class="n" style="left:2064.88px;top:925.95px;width:7.60px;height:6.40px"></div>
<div class="n" style="left:2073.68px;top:925.95px;width:8.00px;height:6.40px"></div>
<div class="seg" style="left:1086.50px;top:971.18px;width:23.93px;height:140.2px;border-radius:6px 6px 6px 6px;"></div>
<div class="seg" style="left:1110.08px;top:971.18px;width:24.73px;height:140.2px;border-radius:6px 6px 6px 6px;"></div>
<div class="seg" style="left:1134.45px;top:971.18px;width:26.60px;height:140.2px;border-radius:6px 6px 6px 6px;"></div>
<div class="seg" style="left:1160.70px;top:971.18px;width:24.73px;height:140.2px;border-radius:6px 6px 6px 6px;"></div>
<div class="seg" style="left:1185.08px;top:971.18px;width:26.60px;height:140.2px;border-radius:6px 6px 6px 6px;"></div>
<div class="seg" style="left:1211.33px;top:971.18px;width:24.73px;height:140.2px;border-radius:6px 6px 6px 6px;"></div>
<div class="seg" style="left:1235.70px;top:971.18px;width:24.73px;height:140.2px;border-radius:6px 6px 6px 6px;"></div>
<div class="seg" style="left:1260.08px;top:971.18px;width:26.60px;height:140.2px;border-radius:6px 6px 6px 6px;"></div>
<div class="seg" style="left:1286.33px;top:971.18px;width:24.73px;height:140.2px;border-radius:6px 6px 6px 6px;"></div>
<div class="seg" style="left:1310.70px;top:971.18px;width:26.60px;height:140.2px;border-radius:6px 6px 6px 6px;"></div>
<div class="seg" style="left:1336.95px;top:971.18px;width:24.73px;height:140.2px;border-radius:6px 6px 6px 6px;"></div>
<div class="seg" style="left:1361.33px;top:971.18px;width:24.73px;height:140.2px;border-radius:6px 6px 6px 6px;"></div>
<div class="seg" style="left:1385.70px;top:971.18px;width:26.60px;height:140.2px;border-radius:6px 6px 6px 6px;"></div>
<div class="seg" style="left:1411.95px;top:971.18px;width:24.73px;height:140.2px;border-radius:6px 6px 6px 6px;"></div>
<div class="seg" style="left:1436.33px;top:971.18px;width:26.60px;height:140.2px;border-radius:6px 6px 6px 6px;"></div>
<div class="seg" style="left:1462.58px;top:971.18px;width:23.82px;height:140.2px;border-radius:6px 6px 6px 6px;"></div>
<div class="h" style="left:1090.30px;top:1058.78px;width:4.10px;height:6.00px"></div>
<div class="h" style="left:1103.80px;top:1058.78px;width:4.10px;height:6.00px"></div>
<div class="n" style="left:1116.80px;top:1058.78px;width:4.10px;height:6.00px"></div>
<div class="n" style="left:1129.90px;top:1058.78px;width:4.10px;height:6.00px"></div>
<div class="n" style="left:1140.57px;top:1058.78px;width:4.10px;height:6.00px"></div>
<div class="n" style="left:1154.07px;top:1058.78px;width:4.10px;height:6.00px"></div>
<div class="n" style="left:1167.07px;top:1058.78px;width:4.10px;height:6.00px"></div>
<div class="n" style="left:1180.17px;top:1058.78px;width:4.10px;height:6.00px"></div>
<div class="n" style="left:1190.84px;top:1058.78px;width:4.10px;height:6.00px"></div>
<div class="n" style="left:1204.34px;top:1058.78px;width:4.10px;height:6.00px"></div>
<div class="n" style="left:1217.34px;top:1058.78px;width:4.10px;height:6.00px"></div>
<div class="n" style="left:1230.44px;top:1058.78px;width:4.10px;height:6.00px"></div>
<div class="n" style="left:1241.10px;top:1058.78px;width:4.10px;height:6.00px"></div>
<div class="n" style="left:1254.60px;top:1058.78px;width:4.10px;height:6.00px"></div>
<div class="n" style="left:1267.60px;top:1058.78px;width:4.10px;height:6.00px"></div>
<div class="n" style="left:1280.70px;top:1058.78px;width:4.10px;height:6.00px"></div>
<div class="n" style="left:1291.37px;top:1058.78px;width:4.10px;height:6.00px"></div>
<div class="n" style="left:1304.87px;top:1058.78px;width:4.10px;height:6.00px"></div>
<div class="n" style="left:1317.87px;top:1058.78px;width:4.10px;height:6.00px"></div>
<div class="n" style="left:1330.97px;top:1058.78px;width:4.10px;height:6.00px"></div>
<div class="n" style="left:1341.64px;top:1058.78px;width:4.10px;height:6.00px"></div>
<div class="n" style="left:1355.14px;top:1058.78px;width:4.10px;height:6.00px"></div>
<div class="n" style="left:1368.14px;top:1058.78px;width:4.10px;height:6.00px"></div>
<div class="n" style="left:1381.24px;top:1058.78px;width:4.10px;height:6.00px"></div>
<div class="n" style="left:1391.91px;top:1058.78px;width:4.10px;height:6.00px"></div>
<div class="n" style="left:1405.41px;top:1058.78px;width:4.10px;height:6.00px"></div>
<div class="n" style="left:1418.41px;top:1058.78px;width:4.10px;height:6.00px"></div>
<div class="n" style="left:1431.51px;top:1058.78px;width:4.10px;height:6.00px"></div>
<div class="n" style="left:1442.18px;top:1058.78px;width:4.10px;height:6.00px"></div>
<div class="n" style="left:1455.68px;top:1058.78px;width:4.10px;height:6.00px"></div>
<div class="n" style="left:1468.68px;top:1058.78px;width:4.10px;height:6.00px"></div>
<div class="n" style="left:1481.78px;top:1058.78px;width:4.10px;height:6.00px"></div>
<div class="seg" style="left:1890.88px;top:971.18px;width:23.93px;height:140.2px;border-radius:6px 6px 6px 6px;"></div>
<div class="seg" style="left:1914.45px;top:971.18px;width:24.73px;height:140.2px;border-radius:6px 6px 6px 6px;"></div>
<div class="seg" style="left:1938.83px;top:971.18px;width:26.60px;height:140.2px;border-radius:6px 6px 6px 6px;"></div>
<div class="seg" style="left:1965.08px;top:971.18px;width:24.73px;height:140.2px;border-radius:6px 6px 6px 6px;"></div>
<div class="seg" style="left:1989.45px;top:971.18px;width:26.60px;height:140.2px;border-radius:6px 6px 6px 6px;"></div>
<div class="seg" style="left:2015.70px;top:971.18px;width:24.73px;height:140.2px;border-radius:6px 6px 6px 6px;"></div>
<div class="seg" style="left:2040.08px;top:971.18px;width:24.72px;height:140.2px;border-radius:6px 6px 6px 6px;"></div>
<div class="seg" style="left:2064.45px;top:971.18px;width:25.70px;height:140.2px;border-radius:6px 6px 6px 6px;"></div>
<div class="h" style="left:1894.67px;top:1058.78px;width:4.10px;height:6.00px"></div>
<div class="h" style="left:1908.17px;top:1058.78px;width:4.10px;height:6.00px"></div>
<div class="n" style="left:1921.17px;top:1058.78px;width:4.10px;height:6.00px"></div>
<div class="n" style="left:1934.27px;top:1058.78px;width:4.10px;height:6.00px"></div>
<div class="n" style="left:1944.94px;top:1058.78px;width:4.10px;height:6.00px"></div>
<div class="n" style="left:1958.44px;top:1058.78px;width:4.10px;height:6.00px"></div>
<div class="n" style="left:1971.44px;top:1058.78px;width:4.10px;height:6.00px"></div>
<div class="n" style="left:1984.54px;top:1058.78px;width:4.10px;height:6.00px"></div>
<div class="n" style="left:1995.21px;top:1058.78px;width:4.10px;height:6.00px"></div>
<div class="n" style="left:2008.71px;top:1058.78px;width:4.10px;height:6.00px"></div>
<div class="n" style="left:2021.71px;top:1058.78px;width:4.10px;height:6.00px"></div>
<div class="n" style="left:2034.81px;top:1058.78px;width:4.10px;height:6.00px"></div>
<div class="n" style="left:2045.48px;top:1058.78px;width:4.10px;height:6.00px"></div>
<div class="n" style="left:2058.98px;top:1058.78px;width:4.10px;height:6.00px"></div>
<div class="n" style="left:2071.98px;top:1058.78px;width:4.10px;height:6.00px"></div>
<div class="n" style="left:2085.08px;top:1058.78px;width:4.10px;height:6.00px"></div>
<div class="seg" style="left:1086.50px;top:1126.81px;width:23.93px;height:140.2px;border-radius:6px 6px 6px 6px;"></div>
<div class="seg" style="left:1110.08px;top:1126.81px;width:24.73px;height:140.2px;border-radius:6px 6px 6px 6px;"></div>
<div class="seg" style="left:1134.45px;top:1126.81px;width:26.60px;height:140.2px;border-radius:6px 6px 6px 6px;"></div>
<div class="seg" style="left:1160.70px;top:1126.81px;width:24.73px;height:140.2px;border-radius:6px 6px 6px 6px;"></div>
<div class="seg" style="left:1185.08px;top:1126.81px;width:26.60px;height:140.2px;border-radius:6px 6px 6px 6px;"></div>
<div class="seg" style="left:1211.33px;top:1126.81px;width:24.73px;height:140.2px;border-radius:6px 6px 6px 6px;"></div>
<div class="seg" style="left:1235.70px;top:1126.81px;width:24.73px;height:140.2px;border-radius:6px 6px 6px 6px;"></div>
<div class="seg" style="left:1260.08px;top:1126.81px;width:26.60px;height:140.2px;border-radius:6px 6px 6px 6px;"></div>
<div class="seg" style="left:1286.33px;top:1126.81px;width:24.73px;height:140.2px;border-radius:6px 6px 6px 6px;"></div>
<div class="seg" style="left:1310.70px;top:1126.81px;width:26.60px;height:140.2px;border-radius:6px 6px 6px 6px;"></div>
<div class="seg" style="left:1336.95px;top:1126.81px;width:24.73px;height:140.2px;border-radius:6px 6px 6px 6px;"></div>
<div class="seg" style="left:1361.33px;top:1126.81px;width:24.73px;height:140.2px;border-radius:6px 6px 6px 6px;"></div>
<div class="seg" style="left:1385.70px;top:1126.81px;width:26.60px;height:140.2px;border-radius:6px 6px 6px 6px;"></div>
<div class="seg" style="left:1411.95px;top:1126.81px;width:24.73px;height:140.2px;border-radius:6px 6px 6px 6px;"></div>
<div class="seg" style="left:1436.33px;top:1126.81px;width:26.60px;height:140.2px;border-radius:6px 6px 6px 6px;"></div>
<div class="seg" style="left:1462.58px;top:1126.81px;width:23.82px;height:140.2px;border-radius:6px 6px 6px 6px;"></div>
<div class="h" style="left:1090.30px;top:1221.81px;width:4.10px;height:6.00px"></div>
<div class="h" style="left:1103.80px;top:1221.81px;width:4.10px;height:6.00px"></div>
<div class="n" style="left:1116.80px;top:1221.81px;width:4.10px;height:6.00px"></div>
<div class="n" style="left:1129.90px;top:1221.81px;width:4.10px;height:6.00px"></div>
<div class="n" style="left:1140.57px;top:1221.81px;width:4.10px;height:6.00px"></div>
<div class="n" style="left:1154.07px;top:1221.81px;width:4.10px;height:6.00px"></div>
<div class="n" style="left:1167.07px;top:1221.81px;width:4.10px;height:6.00px"></div>
<div class="n" style="left:1180.17px;top:1221.81px;width:4.10px;height:6.00px"></div>
<div class="n" style="left:1190.84px;top:1221.81px;width:4.10px;height:6.00px"></div>
<div class="n" style="left:1204.34px;top:1221.81px;width:4.10px;height:6.00px"></div>
<div class="n" style="left:1217.34px;top:1221.81px;width:4.10px;height:6.00px"></div>
<div class="n" style="left:1230.44px;top:1221.81px;width:4.10px;height:6.00px"></div>
<div class="n" style="left:1241.10px;top:1221.81px;width:4.10px;height:6.00px"></div>
<div class="n" style="left:1254.60px;top:1221.81px;width:4.10px;height:6.00px"></div>
<div class="n" style="left:1267.60px;top:1221.81px;width:4.10px;height:6.00px"></div>
<div class="n" style="left:1280.70px;top:1221.81px;width:4.10px;height:6.00px"></div>
<div class="n" style="left:1291.37px;top:1221.81px;width:4.10px;height:6.00px"></div>
<div class="n" style="left:1304.87px;top:1221.81px;width:4.10px;height:6.00px"></div>
<div class="n" style="left:1317.87px;top:1221.81px;width:4.10px;height:6.00px"></div>
<div class="n" style="left:1330.97px;top:1221.81px;width:4.10px;height:6.00px"></div>
<div class="n" style="left:1341.64px;top:1221.81px;width:4.10px;height:6.00px"></div>
<div class="n" style="left:1355.14px;top:1221.81px;width:4.10px;height:6.00px"></div>
<div class="n" style="left:1368.14px;top:1221.81px;width:4.10px;height:6.00px"></div>
<div class="n" style="left:1381.24px;top:1221.81px;width:4.10px;height:6.00px"></div>
<div class="n" style="left:1391.91px;top:1221.81px;width:4.10px;height:6.00px"></div>
<div class="n" style="left:1405.41px;top:1221.81px;width:4.10px;height:6.00px"></div>
<div class="n" style="left:1418.41px;top:1221.81px;width:4.10px;height:6.00px"></div>
<div class="n" style="left:1431.51px;top:1221.81px;width:4.10px;height:6.00px"></div>
<div class="n" style="left:1442.18px;top:1221.81px;width:4.10px;height:6.00px"></div>
<div class="n" style="left:1455.68px;top:1221.81px;width:4.10px;height:6.00px"></div>
<div class="n" style="left:1468.68px;top:1221.81px;width:4.10px;height:6.00px"></div>
<div class="n" style="left:1481.78px;top:1221.81px;width:4.10px;height:6.00px"></div>
<div class="seg" style="left:1890.88px;top:1126.81px;width:23.93px;height:140.2px;border-radius:6px 6px 6px 6px;"></div>
<div class="seg" style="left:1914.45px;top:1126.81px;width:24.73px;height:140.2px;border-radius:6px 6px 6px 6px;"></div>
<div class="seg" style="left:1938.83px;top:1126.81px;width:26.60px;height:140.2px;border-radius:6px 6px 6px 6px;"></div>
<div class="seg" style="left:1965.08px;top:1126.81px;width:24.73px;height:140.2px;border-radius:6px 6px 6px 6px;"></div>
<div class="seg" style="left:1989.45px;top:1126.81px;width:26.60px;height:140.2px;border-radius:6px 6px 6px 6px;"></div>
<div class="seg" style="left:2015.70px;top:1126.81px;width:24.73px;height:140.2px;border-radius:6px 6px 6px 6px;"></div>
<div class="seg" style="left:2040.08px;top:1126.81px;width:24.72px;height:140.2px;border-radius:6px 6px 6px 6px;"></div>
<div class="seg" style="left:2064.45px;top:1126.81px;width:25.70px;height:140.2px;border-radius:6px 6px 6px 6px;"></div>
<div class="h" style="left:1894.67px;top:1221.81px;width:4.10px;height:6.00px"></div>
<div class="h" style="left:1908.17px;top:1221.81px;width:4.10px;height:6.00px"></div>
<div class="n" style="left:1921.17px;top:1221.81px;width:4.10px;height:6.00px"></div>
<div class="n" style="left:1934.27px;top:1221.81px;width:4.10px;height:6.00px"></div>
<div class="n" style="left:1944.94px;top:1221.81px;width:4.10px;height:6.00px"></div>
<div class="n" style="left:1958.44px;top:1221.81px;width:4.10px;height:6.00px"></div>
<div class="n" style="left:1971.44px;top:1221.81px;width:4.10px;height:6.00px"></div>
<div class="n" style="left:1984.54px;top:1221.81px;width:4.10px;height:6.00px"></div>
<div class="n" style="left:1995.21px;top:1221.81px;width:4.10px;height:6.00px"></div>
<div class="n" style="left:2008.71px;top:1221.81px;width:4.10px;height:6.00px"></div>
<div class="n" style="left:2021.71px;top:1221.81px;width:4.10px;height:6.00px"></div>
<div class="n" style="left:2034.81px;top:1221.81px;width:4.10px;height:6.00px"></div>
<div class="n" style="left:2045.48px;top:1221.81px;width:4.10px;height:6.00px"></div>
<div class="n" style="left:2058.98px;top:1221.81px;width:4.10px;height:6.00px"></div>
<div class="n" style="left:2071.98px;top:1221.81px;width:4.10px;height:6.00px"></div>
<div class="n" style="left:2085.08px;top:1221.81px;width:4.10px;height:6.00px"></div>
<div class="bl" style="left:1090.40px;top:1281.84px;width:5.8px;height:141.6px"></div>
<div style="left:1092.00px;top:1363.00px;width:2.00px;height:2.00px;background:#8fbdf0;"></div>
<div class="bl" style="left:1103.52px;top:1281.84px;width:5.8px;height:141.6px"></div>
<div style="left:1105.00px;top:1363.00px;width:2.00px;height:2.00px;background:#8fbdf0;"></div>
<div class="bl" style="left:1114.77px;top:1281.84px;width:5.8px;height:141.6px"></div>
<div style="left:1117.00px;top:1363.00px;width:2.00px;height:2.00px;background:#8fbdf0;"></div>
<div class="bl" style="left:1127.90px;top:1281.84px;width:5.8px;height:141.6px"></div>
<div style="left:1130.00px;top:1363.00px;width:2.00px;height:2.00px;background:#8fbdf0;"></div>
<div class="bl" style="left:1141.02px;top:1281.84px;width:5.8px;height:141.6px"></div>
<div style="left:1143.00px;top:1363.00px;width:2.00px;height:2.00px;background:#8fbdf0;"></div>
<div class="bl" style="left:1152.27px;top:1281.84px;width:5.8px;height:141.6px"></div>
<div style="left:1154.00px;top:1363.00px;width:2.00px;height:2.00px;background:#8fbdf0;"></div>
<div class="bl" style="left:1165.40px;top:1281.84px;width:5.8px;height:141.6px"></div>
<div style="left:1167.00px;top:1363.00px;width:2.00px;height:2.00px;background:#8fbdf0;"></div>
<div class="bl" style="left:1178.52px;top:1281.84px;width:5.8px;height:141.6px"></div>
<div style="left:1180.00px;top:1363.00px;width:2.00px;height:2.00px;background:#8fbdf0;"></div>
<div class="bl" style="left:1191.65px;top:1281.84px;width:5.8px;height:141.6px"></div>
<div style="left:1194.00px;top:1363.00px;width:2.00px;height:2.00px;background:#8fbdf0;"></div>
<div class="bl" style="left:1202.90px;top:1281.84px;width:5.8px;height:141.6px"></div>
<div style="left:1205.00px;top:1363.00px;width:2.00px;height:2.00px;background:#8fbdf0;"></div>
<div class="bl" style="left:1216.02px;top:1281.84px;width:5.8px;height:141.6px"></div>
<div style="left:1218.00px;top:1363.00px;width:2.00px;height:2.00px;background:#8fbdf0;"></div>
<div class="bl" style="left:1229.15px;top:1281.84px;width:5.8px;height:141.6px"></div>
<div style="left:1231.00px;top:1363.00px;width:2.00px;height:2.00px;background:#8fbdf0;"></div>
<div class="bl" style="left:1240.40px;top:1281.84px;width:5.8px;height:141.6px"></div>
<div style="left:1242.00px;top:1363.00px;width:2.00px;height:2.00px;background:#8fbdf0;"></div>
<div class="bl" style="left:1253.52px;top:1281.84px;width:5.8px;height:141.6px"></div>
<div style="left:1255.00px;top:1363.00px;width:2.00px;height:2.00px;background:#8fbdf0;"></div>
<div class="bl" style="left:1266.65px;top:1281.84px;width:5.8px;height:141.6px"></div>
<div style="left:1269.00px;top:1363.00px;width:2.00px;height:2.00px;background:#8fbdf0;"></div>
<div class="bl" style="left:1277.90px;top:1281.84px;width:5.8px;height:141.6px"></div>
<div style="left:1280.00px;top:1363.00px;width:2.00px;height:2.00px;background:#8fbdf0;"></div>
<div class="bl" style="left:1291.02px;top:1281.84px;width:5.8px;height:141.6px"></div>
<div style="left:1293.00px;top:1363.00px;width:2.00px;height:2.00px;background:#8fbdf0;"></div>
<div class="bl" style="left:1304.15px;top:1281.84px;width:5.8px;height:141.6px"></div>
<div style="left:1306.00px;top:1363.00px;width:2.00px;height:2.00px;background:#8fbdf0;"></div>
<div class="bl" style="left:1317.27px;top:1281.84px;width:5.8px;height:141.6px"></div>
<div style="left:1319.00px;top:1363.00px;width:2.00px;height:2.00px;background:#8fbdf0;"></div>
<div class="bl" style="left:1328.52px;top:1281.84px;width:5.8px;height:141.6px"></div>
<div style="left:1330.00px;top:1363.00px;width:2.00px;height:2.00px;background:#8fbdf0;"></div>
<div class="bl" style="left:1341.65px;top:1281.84px;width:5.8px;height:141.6px"></div>
<div style="left:1344.00px;top:1363.00px;width:2.00px;height:2.00px;background:#8fbdf0;"></div>
<div class="bl" style="left:1354.77px;top:1281.84px;width:5.8px;height:141.6px"></div>
<div style="left:1357.00px;top:1363.00px;width:2.00px;height:2.00px;background:#8fbdf0;"></div>
<div class="bl" style="left:1366.02px;top:1281.84px;width:5.8px;height:141.6px"></div>
<div style="left:1368.00px;top:1363.00px;width:2.00px;height:2.00px;background:#8fbdf0;"></div>
<div class="bl" style="left:1379.15px;top:1281.84px;width:5.8px;height:141.6px"></div>
<div style="left:1381.00px;top:1363.00px;width:2.00px;height:2.00px;background:#8fbdf0;"></div>
<div class="bl" style="left:1392.27px;top:1281.84px;width:5.8px;height:141.6px"></div>
<div style="left:1394.00px;top:1363.00px;width:2.00px;height:2.00px;background:#8fbdf0;"></div>
<div class="bl" style="left:1405.40px;top:1281.84px;width:5.8px;height:141.6px"></div>
<div style="left:1407.00px;top:1363.00px;width:2.00px;height:2.00px;background:#8fbdf0;"></div>
<div class="bl" style="left:1416.65px;top:1281.84px;width:5.8px;height:141.6px"></div>
<div style="left:1419.00px;top:1363.00px;width:2.00px;height:2.00px;background:#8fbdf0;"></div>
<div class="bl" style="left:1429.77px;top:1281.84px;width:5.8px;height:141.6px"></div>
<div style="left:1432.00px;top:1363.00px;width:2.00px;height:2.00px;background:#8fbdf0;"></div>
<div class="bl" style="left:1442.90px;top:1281.84px;width:5.8px;height:141.6px"></div>
<div style="left:1445.00px;top:1363.00px;width:2.00px;height:2.00px;background:#8fbdf0;"></div>
<div class="bl" style="left:1454.15px;top:1281.84px;width:5.8px;height:141.6px"></div>
<div style="left:1456.00px;top:1363.00px;width:2.00px;height:2.00px;background:#8fbdf0;"></div>
<div class="bl" style="left:1467.27px;top:1281.84px;width:5.8px;height:141.6px"></div>
<div style="left:1469.00px;top:1363.00px;width:2.00px;height:2.00px;background:#8fbdf0;"></div>
<div class="bl" style="left:1480.40px;top:1281.84px;width:5.8px;height:141.6px"></div>
<div style="left:1482.00px;top:1363.00px;width:2.00px;height:2.00px;background:#8fbdf0;"></div>
<div style="left:1882.50px;top:1437.40px;width:3.40px;height:3.00px;background:#2a6bc0;border-radius:2px 2px 0 0;"></div>
<div style="left:1896.30px;top:1437.40px;width:3.40px;height:3.00px;background:#2a6bc0;border-radius:2px 2px 0 0;"></div>
<div style="left:1908.30px;top:1437.40px;width:3.40px;height:3.00px;background:#2a6bc0;border-radius:2px 2px 0 0;"></div>
<div style="left:1921.20px;top:1437.40px;width:3.40px;height:3.00px;background:#2a6bc0;border-radius:2px 2px 0 0;"></div>
<div style="left:1934.10px;top:1437.40px;width:3.40px;height:3.00px;background:#2a6bc0;border-radius:2px 2px 0 0;"></div>
<div style="left:1947.00px;top:1437.40px;width:3.40px;height:3.00px;background:#2a6bc0;border-radius:2px 2px 0 0;"></div>
<div style="left:1959.90px;top:1437.40px;width:3.40px;height:3.00px;background:#2a6bc0;border-radius:2px 2px 0 0;"></div>
<div style="left:1971.90px;top:1437.40px;width:3.40px;height:3.00px;background:#2a6bc0;border-radius:2px 2px 0 0;"></div>
<div style="left:1983.90px;top:1437.40px;width:3.40px;height:3.00px;background:#2a6bc0;border-radius:2px 2px 0 0;"></div>
<div style="left:1995.10px;top:1437.40px;width:3.40px;height:3.00px;background:#2a6bc0;border-radius:2px 2px 0 0;"></div>
<div style="left:2008.00px;top:1437.40px;width:3.40px;height:3.00px;background:#2a6bc0;border-radius:2px 2px 0 0;"></div>
<div style="left:2021.70px;top:1437.40px;width:3.40px;height:3.00px;background:#2a6bc0;border-radius:2px 2px 0 0;"></div>
<div style="left:2035.50px;top:1437.40px;width:3.40px;height:3.00px;background:#2a6bc0;border-radius:2px 2px 0 0;"></div>
<div style="left:2046.70px;top:1437.40px;width:3.40px;height:3.00px;background:#2a6bc0;border-radius:2px 2px 0 0;"></div>
<div style="left:2059.60px;top:1437.40px;width:3.40px;height:3.00px;background:#2a6bc0;border-radius:2px 2px 0 0;"></div>
<div style="left:2073.30px;top:1437.40px;width:3.40px;height:3.00px;background:#2a6bc0;border-radius:2px 2px 0 0;"></div>
<div style="left:2083.60px;top:1437.40px;width:3.40px;height:3.00px;background:#2a6bc0;border-radius:2px 2px 0 0;"></div>
<svg style="left:980px;top:130px" width="40" height="1310" viewBox="980 130 40 1310"><path d="M983.8 185.8 L983.8 135.2 L1009.2 135.2 L1009.2 160.9 Z" fill="#414144"/><path d="M983.8 136.2 L1009.2 136.2 L1009.2 160.9 L985.0 185.2" fill="none" stroke="#f4f4f6" stroke-width="2.1" stroke-linejoin="miter"/><path d="M984.95 184.2 V1440" fill="none" stroke="#f6f6f8" stroke-width="2.4"/></svg>
<span class="t" style="left:992.0px;top:137.5px;font-size:22.5px;color:#b9b9bd;">1</span>
<span class="t" style="left:348.6px;top:214.1px;font-size:24.4px;font-weight:300;color:#e2e2e6;letter-spacing:0.3px;">温暖海浪</span>
<svg style="left:346.00px;top:265.83px" width="40" height="42" viewBox="0 0 40 42"><path d="M3.2 11.6 H12.6 L25.6 2.4 Q27.8 1.2 27.8 3.8 V36 Q27.8 38.6 25.6 37.2 L12.6 28.6 H3.2 Q1.9 28.6 1.9 27.2 V13 Q1.9 11.6 3.2 11.6Z" fill="#dedee4"/><path d="M1.2 4.6 L34.6 38.4" stroke="#28282c" stroke-width="8.2" stroke-linecap="round"/><path d="M1.2 4.6 L34.6 38.4" stroke="#e6e6ec" stroke-width="3.1" stroke-linecap="round"/></svg>
<svg style="left:424.00px;top:263.33px" width="48" height="46" viewBox="0 0 48 46"><path d="M4.5 33.6 V23.6 A19.4 19.4 0 0 1 43.3 23.6 V33.6" fill="none" stroke="#ffd60a" stroke-width="3.7" stroke-linecap="butt"/><rect x="8.3" y="25.6" width="8.1" height="16.8" rx="3" fill="#ffd60a"/><rect x="31.7" y="25.6" width="8.1" height="16.8" rx="3" fill="#ffd60a"/></svg>
<div style="left:516.60px;top:275.63px;width:271.40px;height:22.40px;background:#1b1b1d;border-radius:11.2px;"></div>
<div style="left:635.30px;top:268.23px;width:37.2px;height:37.2px;border-radius:50%;background:#48484b;box-shadow:inset 0 0 0 1.8px #d8d8dc,0 0 0 1.2px rgba(10,10,12,.5);"></div>
<svg style="left:820.00px;top:210.03px" width="140" height="120" viewBox="0 0 140 120"><ellipse cx="72" cy="97" rx="42" ry="9" fill="#202023" opacity=".45"/><g stroke="#131315" stroke-width="2.2" stroke-linecap="round" fill="none"><path d="M53.3 39.2 L90.4 95.4"/><path d="M82.9 47.9 L32.9 90.4"/><path d="M31.2 91.2 L54.6 79.2"/><path d="M72.5 102.9 L103.8 88.3"/></g><path d="M14.9 29.8 L19 26.3 L31.6 23 L68 24.6 L115.1 35.2 Q117.2 36.6 116 39.2 L93.1 47.3 L93.2 43.9 L28.7 31.2 Z" fill="#e60f1f"/><path d="M102.1 38.75 L115.1 35.2 Q117.2 36.6 116 39.2 L93.1 47.3 L94 42.8 Z" fill="#bf0c1a"/><path d="M92.6 45.6 L94 42.8 L101 39.6 L100.4 41.6 Z" fill="#ff4a55" opacity=".55"/><path d="M31.1 28 L102.1 38.75 L94 42.8 L28.9 30.2 Z" fill="#f4f4f4"/><path d="M32.6 27.7 L101.8 38.2 L98.6 40 L31.4 29.2 Z" fill="#17171a" opacity=".92"/><path d="M28.9 30.3 L94 42.9 L93.6 43.9 L28.7 31.2 Z" fill="#3a0a10"/><path d="M37.4 17.6 L66.4 21.8 L67.2 26.8 L38.2 23.9 Z" fill="#22121b"/><g stroke="#ececf4" stroke-width="1.15"><path d="M48 21.6v4M51.4 22v4.2M54.8 22.5v4.2M58.2 23v4.2M61.6 23.5v3.8M65 24v3"/></g><path d="M26.6 24.4 L30.8 23.5 L31.2 27.7 L27 28.1 Z" fill="#4d3c94"/></svg>
<span class="t" style="left:348.6px;top:369.8px;font-size:24.4px;font-weight:300;color:#e2e2e6;letter-spacing:0.3px;">温暖海浪</span>
<svg style="left:346.00px;top:421.46px" width="40" height="42" viewBox="0 0 40 42"><path d="M3.2 11.6 H12.6 L25.6 2.4 Q27.8 1.2 27.8 3.8 V36 Q27.8 38.6 25.6 37.2 L12.6 28.6 H3.2 Q1.9 28.6 1.9 27.2 V13 Q1.9 11.6 3.2 11.6Z" fill="#dedee4"/><path d="M1.2 4.6 L34.6 38.4" stroke="#28282c" stroke-width="8.2" stroke-linecap="round"/><path d="M1.2 4.6 L34.6 38.4" stroke="#e6e6ec" stroke-width="3.1" stroke-linecap="round"/></svg>
<svg style="left:424.00px;top:418.96px" width="48" height="46" viewBox="0 0 48 46"><path d="M4.5 33.6 V23.6 A19.4 19.4 0 0 1 43.3 23.6 V33.6" fill="none" stroke="#ffd60a" stroke-width="3.7" stroke-linecap="butt"/><rect x="8.3" y="25.6" width="8.1" height="16.8" rx="3" fill="#ffd60a"/><rect x="31.7" y="25.6" width="8.1" height="16.8" rx="3" fill="#ffd60a"/></svg>
<div style="left:516.60px;top:431.26px;width:271.40px;height:22.40px;background:#1b1b1d;border-radius:11.2px;"></div>
<div style="left:635.30px;top:423.86px;width:37.2px;height:37.2px;border-radius:50%;background:#48484b;box-shadow:inset 0 0 0 1.8px #d8d8dc,0 0 0 1.2px rgba(10,10,12,.5);"></div>
<svg style="left:820.00px;top:365.66px" width="140" height="120" viewBox="0 0 140 120"><ellipse cx="72" cy="97" rx="42" ry="9" fill="#202023" opacity=".45"/><g stroke="#131315" stroke-width="2.2" stroke-linecap="round" fill="none"><path d="M53.3 39.2 L90.4 95.4"/><path d="M82.9 47.9 L32.9 90.4"/><path d="M31.2 91.2 L54.6 79.2"/><path d="M72.5 102.9 L103.8 88.3"/></g><path d="M14.9 29.8 L19 26.3 L31.6 23 L68 24.6 L115.1 35.2 Q117.2 36.6 116 39.2 L93.1 47.3 L93.2 43.9 L28.7 31.2 Z" fill="#e60f1f"/><path d="M102.1 38.75 L115.1 35.2 Q117.2 36.6 116 39.2 L93.1 47.3 L94 42.8 Z" fill="#bf0c1a"/><path d="M92.6 45.6 L94 42.8 L101 39.6 L100.4 41.6 Z" fill="#ff4a55" opacity=".55"/><path d="M31.1 28 L102.1 38.75 L94 42.8 L28.9 30.2 Z" fill="#f4f4f4"/><path d="M32.6 27.7 L101.8 38.2 L98.6 40 L31.4 29.2 Z" fill="#17171a" opacity=".92"/><path d="M28.9 30.3 L94 42.9 L93.6 43.9 L28.7 31.2 Z" fill="#3a0a10"/><path d="M37.4 17.6 L66.4 21.8 L67.2 26.8 L38.2 23.9 Z" fill="#22121b"/><g stroke="#ececf4" stroke-width="1.15"><path d="M48 21.6v4M51.4 22v4.2M54.8 22.5v4.2M58.2 23v4.2M61.6 23.5v3.8M65 24v3"/></g><path d="M26.6 24.4 L30.8 23.5 L31.2 27.7 L27 28.1 Z" fill="#4d3c94"/></svg>
<span class="t" style="left:348.6px;top:525.4px;font-size:24.4px;font-weight:300;color:#e2e2e6;letter-spacing:0.3px;">教堂街混合合成器</span>
<svg style="left:346.00px;top:577.09px" width="40" height="42" viewBox="0 0 40 42"><path d="M3.2 11.6 H12.6 L25.6 2.4 Q27.8 1.2 27.8 3.8 V36 Q27.8 38.6 25.6 37.2 L12.6 28.6 H3.2 Q1.9 28.6 1.9 27.2 V13 Q1.9 11.6 3.2 11.6Z" fill="#dedee4"/><path d="M1.2 4.6 L34.6 38.4" stroke="#28282c" stroke-width="8.2" stroke-linecap="round"/><path d="M1.2 4.6 L34.6 38.4" stroke="#e6e6ec" stroke-width="3.1" stroke-linecap="round"/></svg>
<svg style="left:424.00px;top:574.59px" width="48" height="46" viewBox="0 0 48 46"><path d="M4.5 33.6 V23.6 A19.4 19.4 0 0 1 43.3 23.6 V33.6" fill="none" stroke="#ffd60a" stroke-width="3.7" stroke-linecap="butt"/><rect x="8.3" y="25.6" width="8.1" height="16.8" rx="3" fill="#ffd60a"/><rect x="31.7" y="25.6" width="8.1" height="16.8" rx="3" fill="#ffd60a"/></svg>
<div style="left:516.60px;top:586.89px;width:271.40px;height:22.40px;background:#1b1b1d;border-radius:11.2px;"></div>
<div style="left:584.30px;top:579.49px;width:37.2px;height:37.2px;border-radius:50%;background:#48484b;box-shadow:inset 0 0 0 1.8px #d8d8dc,0 0 0 1.2px rgba(10,10,12,.5);"></div>
<svg style="left:820.00px;top:519.99px" width="140" height="120" viewBox="0 0 140 120"><ellipse cx="70" cy="98" rx="44" ry="9" fill="#202023" opacity=".45"/><g stroke="#131315" stroke-width="2.2" stroke-linecap="round" fill="none"><path d="M47.9 30 L89.6 95.8"/><path d="M82.1 40.8 L27.5 88.7"/><path d="M26.7 89.6 L60 75"/><path d="M70 105 L104.2 88.3"/></g><path d="M19.2 19.2 L35 13.7 L116.7 25.8 Q117.6 27.6 116.2 29.2 L95.8 39.2 L92.4 37.4 L27.4 23.4 Z" fill="#2b1917"/><path d="M99.6 32.1 L116.7 25.8 Q117.6 27.6 116.2 29.2 L95.8 39.2 L92.1 35 Z" fill="#1c100f"/><path d="M27.9 21.2 L99.6 32.1 L92.1 35 L27.5 22.9 Z" fill="#efefef"/><path d="M60 26.4 L99 32.3 L97 33.2 L59.4 27.3 Z" fill="#151517"/><path d="M68 19.2 L108 25.4 L106.6 26.8 L67 20.8 Z" fill="#2f9a8c" opacity=".75"/><path d="M45 16 L53 17.2 L52.4 18.6 L44.4 17.4 Z" fill="#66c8b8" opacity=".7"/><path d="M38 14.6 L112 25.6" stroke="#5a2a24" stroke-width=".8" fill="none"/></svg>
<span class="t" style="left:348.6px;top:681.0px;font-size:24.4px;font-weight:300;color:#e2e2e6;letter-spacing:0.3px;">教堂街混合合成器</span>
<svg style="left:346.00px;top:732.72px" width="40" height="42" viewBox="0 0 40 42"><path d="M3.2 11.6 H12.6 L25.6 2.4 Q27.8 1.2 27.8 3.8 V36 Q27.8 38.6 25.6 37.2 L12.6 28.6 H3.2 Q1.9 28.6 1.9 27.2 V13 Q1.9 11.6 3.2 11.6Z" fill="#dedee4"/><path d="M1.2 4.6 L34.6 38.4" stroke="#28282c" stroke-width="8.2" stroke-linecap="round"/><path d="M1.2 4.6 L34.6 38.4" stroke="#e6e6ec" stroke-width="3.1" stroke-linecap="round"/></svg>
<svg style="left:424.00px;top:730.22px" width="48" height="46" viewBox="0 0 48 46"><path d="M4.5 33.6 V23.6 A19.4 19.4 0 0 1 43.3 23.6 V33.6" fill="none" stroke="#ffd60a" stroke-width="3.7" stroke-linecap="butt"/><rect x="8.3" y="25.6" width="8.1" height="16.8" rx="3" fill="#ffd60a"/><rect x="31.7" y="25.6" width="8.1" height="16.8" rx="3" fill="#ffd60a"/></svg>
<div style="left:516.60px;top:742.52px;width:271.40px;height:22.40px;background:#1b1b1d;border-radius:11.2px;"></div>
<div style="left:590.10px;top:735.12px;width:37.2px;height:37.2px;border-radius:50%;background:#48484b;box-shadow:inset 0 0 0 1.8px #d8d8dc,0 0 0 1.2px rgba(10,10,12,.5);"></div>
<svg style="left:820.00px;top:675.62px" width="140" height="120" viewBox="0 0 140 120"><ellipse cx="70" cy="98" rx="44" ry="9" fill="#202023" opacity=".45"/><g stroke="#131315" stroke-width="2.2" stroke-linecap="round" fill="none"><path d="M47.9 30 L89.6 95.8"/><path d="M82.1 40.8 L27.5 88.7"/><path d="M26.7 89.6 L60 75"/><path d="M70 105 L104.2 88.3"/></g><path d="M19.2 19.2 L35 13.7 L116.7 25.8 Q117.6 27.6 116.2 29.2 L95.8 39.2 L92.4 37.4 L27.4 23.4 Z" fill="#2b1917"/><path d="M99.6 32.1 L116.7 25.8 Q117.6 27.6 116.2 29.2 L95.8 39.2 L92.1 35 Z" fill="#1c100f"/><path d="M27.9 21.2 L99.6 32.1 L92.1 35 L27.5 22.9 Z" fill="#efefef"/><path d="M60 26.4 L99 32.3 L97 33.2 L59.4 27.3 Z" fill="#151517"/><path d="M68 19.2 L108 25.4 L106.6 26.8 L67 20.8 Z" fill="#2f9a8c" opacity=".75"/><path d="M45 16 L53 17.2 L52.4 18.6 L44.4 17.4 Z" fill="#66c8b8" opacity=".7"/><path d="M38 14.6 L112 25.6" stroke="#5a2a24" stroke-width=".8" fill="none"/></svg>
<span class="t" style="left:348.6px;top:836.6px;font-size:24.4px;font-weight:300;color:#e2e2e6;letter-spacing:0.3px;">老唱片挖掘者</span>
<svg style="left:346.00px;top:888.35px" width="40" height="42" viewBox="0 0 40 42"><path d="M3.2 11.6 H12.6 L25.6 2.4 Q27.8 1.2 27.8 3.8 V36 Q27.8 38.6 25.6 37.2 L12.6 28.6 H3.2 Q1.9 28.6 1.9 27.2 V13 Q1.9 11.6 3.2 11.6Z" fill="#dedee4"/><path d="M1.2 4.6 L34.6 38.4" stroke="#28282c" stroke-width="8.2" stroke-linecap="round"/><path d="M1.2 4.6 L34.6 38.4" stroke="#e6e6ec" stroke-width="3.1" stroke-linecap="round"/></svg>
<svg style="left:424.00px;top:885.85px" width="48" height="46" viewBox="0 0 48 46"><path d="M4.5 33.6 V23.6 A19.4 19.4 0 0 1 43.3 23.6 V33.6" fill="none" stroke="#ffd60a" stroke-width="3.7" stroke-linecap="butt"/><rect x="8.3" y="25.6" width="8.1" height="16.8" rx="3" fill="#ffd60a"/><rect x="31.7" y="25.6" width="8.1" height="16.8" rx="3" fill="#ffd60a"/></svg>
<div style="left:516.60px;top:898.15px;width:271.40px;height:22.40px;background:#1b1b1d;border-radius:11.2px;"></div>
<div style="left:751.10px;top:890.75px;width:37.2px;height:37.2px;border-radius:50%;background:#48484b;box-shadow:inset 0 0 0 1.8px #d8d8dc,0 0 0 1.2px rgba(10,10,12,.5);"></div>
<svg style="left:820.00px;top:829.95px" width="140" height="120" viewBox="0 0 140 120"><defs><linearGradient id="mg1" x1="0" y1="0" x2="0" y2="1"><stop offset="0" stop-color="#8e8e8e"/><stop offset="1" stop-color="#6a6a6a"/></linearGradient><linearGradient id="mb1" x1="0" y1="0" x2="1" y2="1"><stop offset="0" stop-color="#f4f4f4"/><stop offset="1" stop-color="#dcdcdc"/></linearGradient></defs><path d="M15 101 H122 L123 105.5 H14 Z" fill="#161618" opacity=".8"/><path d="M15.4 90.5 H120.8 L121.8 103.4 H14.8 Z" fill="url(#mg1)"/><path d="M18.7 15.2 H117.2 L120.9 90.8 H15.3 Z" fill="#b9b9b9"/><path d="M20.2 16.6 H115.8 L119.2 89.2 H17 Z" fill="url(#mb1)"/><rect x="73.70" y="17.9" width="7.1" height="5.4" fill="#b2b2b2"/><rect x="83.55" y="17.9" width="7.1" height="5.4" fill="#b2b2b2"/><rect x="93.40" y="17.9" width="7.1" height="5.4" fill="#b2b2b2"/><rect x="103.25" y="17.9" width="7.1" height="5.4" fill="#b2b2b2"/><rect x="32.9" y="23.6" width="38" height="19.4" rx="1" fill="#7d7d7d"/><rect x="34.2" y="26.6" width="35" height="14.3" fill="#151518"/><rect x="40.4" y="30" width="22.2" height="7.6" fill="#1f8bf2"/><ellipse cx="39.60" cy="45.5" rx="2.2" ry="1.2" fill="#c9c9c9" stroke="#8f8f8f" stroke-width=".5"/><ellipse cx="47.55" cy="45.5" rx="2.2" ry="1.2" fill="#c9c9c9" stroke="#8f8f8f" stroke-width=".5"/><ellipse cx="55.50" cy="45.5" rx="2.2" ry="1.2" fill="#c9c9c9" stroke="#8f8f8f" stroke-width=".5"/><ellipse cx="63.45" cy="45.5" rx="2.2" ry="1.2" fill="#c9c9c9" stroke="#8f8f8f" stroke-width=".5"/><circle cx="27.4" cy="26.8" r="2.2" fill="#2c4a3c"/><circle cx="27.2" cy="32.2" r="2.2" fill="#c23a4a"/><circle cx="27.2" cy="40.4" r="1.7" fill="#9a9a9a"/><ellipse cx="26.4" cy="53.2" rx="2.4" ry="1.7" fill="#f6f6f6" stroke="#8a8a8a" stroke-width=".7"/><ellipse cx="26.4" cy="57.6" rx="2.4" ry="1.7" fill="#f6f6f6" stroke="#8a8a8a" stroke-width=".7"/><ellipse cx="26.4" cy="62.2" rx="2.4" ry="1.7" fill="#f6f6f6" stroke="#8a8a8a" stroke-width=".7"/><ellipse cx="26.4" cy="68.2" rx="2.4" ry="1.7" fill="#f6f6f6" stroke="#8a8a8a" stroke-width=".7"/><ellipse cx="26.4" cy="72.6" rx="2.4" ry="1.7" fill="#f6f6f6" stroke="#8a8a8a" stroke-width=".7"/><rect x="25.3" y="77" width="1.6" height="9" rx=".8" fill="#2a2a2a"/><circle cx="26" cy="79.6" r="1.5" fill="#d8d8d8" stroke="#777" stroke-width=".4"/><rect x="34" y="50" width="34" height="35.9" rx=".8" fill="#565656"/><rect x="35.50" y="51.60" width="6.9" height="7.1" rx=".5" fill="#8f8f8f"/><rect x="43.50" y="51.60" width="6.9" height="7.1" rx=".5" fill="#8f8f8f"/><rect x="51.50" y="51.60" width="6.9" height="7.1" rx=".5" fill="#8f8f8f"/><rect x="59.50" y="51.60" width="6.9" height="7.1" rx=".5" fill="#8f8f8f"/><rect x="35.50" y="60.05" width="6.9" height="7.1" rx=".5" fill="#8f8f8f"/><rect x="43.50" y="60.05" width="6.9" height="7.1" rx=".5" fill="#8f8f8f"/><rect x="51.50" y="60.05" width="6.9" height="7.1" rx=".5" fill="#8f8f8f"/><rect x="59.50" y="60.05" width="6.9" height="7.1" rx=".5" fill="#8f8f8f"/><rect x="35.50" y="68.50" width="6.9" height="7.1" rx=".5" fill="#8f8f8f"/><rect x="43.50" y="68.50" width="6.9" height="7.1" rx=".5" fill="#8f8f8f"/><rect x="51.50" y="68.50" width="6.9" height="7.1" rx=".5" fill="#8f8f8f"/><rect x="59.50" y="68.50" width="6.9" height="7.1" rx=".5" fill="#8f8f8f"/><rect x="35.50" y="76.95" width="6.9" height="7.1" rx=".5" fill="#8f8f8f"/><rect x="43.50" y="76.95" width="6.9" height="7.1" rx=".5" fill="#8f8f8f"/><rect x="51.50" y="76.95" width="6.9" height="7.1" rx=".5" fill="#8f8f8f"/><rect x="59.50" y="76.95" width="6.9" height="7.1" rx=".5" fill="#8f8f8f"/><rect x="73.40" y="28.40" width="4.2" height="2.6" rx=".6" fill="#5b7ab8"/><rect x="73.40" y="30.20" width="4.2" height="1.1" rx=".4" fill="#3c4a66"/><rect x="78.50" y="28.40" width="4.2" height="2.6" rx=".6" fill="#5b7ab8"/><rect x="78.50" y="30.20" width="4.2" height="1.1" rx=".4" fill="#3c4a66"/><rect x="83.60" y="28.40" width="4.2" height="2.6" rx=".6" fill="#5b7ab8"/><rect x="83.60" y="30.20" width="4.2" height="1.1" rx=".4" fill="#3c4a66"/><rect x="73.40" y="32.45" width="4.2" height="2.6" rx=".6" fill="#5b7ab8"/><rect x="73.40" y="34.25" width="4.2" height="1.1" rx=".4" fill="#3c4a66"/><rect x="78.50" y="32.45" width="4.2" height="2.6" rx=".6" fill="#5b7ab8"/><rect x="78.50" y="34.25" width="4.2" height="1.1" rx=".4" fill="#3c4a66"/><rect x="83.60" y="32.45" width="4.2" height="2.6" rx=".6" fill="#5b7ab8"/><rect x="83.60" y="34.25" width="4.2" height="1.1" rx=".4" fill="#3c4a66"/><rect x="73.40" y="36.50" width="4.2" height="2.6" rx=".6" fill="#5b7ab8"/><rect x="73.40" y="38.30" width="4.2" height="1.1" rx=".4" fill="#3c4a66"/><rect x="78.50" y="36.50" width="4.2" height="2.6" rx=".6" fill="#5b7ab8"/><rect x="78.50" y="38.30" width="4.2" height="1.1" rx=".4" fill="#3c4a66"/><rect x="83.60" y="36.50" width="4.2" height="2.6" rx=".6" fill="#5b7ab8"/><rect x="83.60" y="38.30" width="4.2" height="1.1" rx=".4" fill="#3c4a66"/><rect x="73.40" y="40.55" width="4.2" height="2.6" rx=".6" fill="#5b7ab8"/><rect x="73.40" y="42.35" width="4.2" height="1.1" rx=".4" fill="#3c4a66"/><rect x="78.50" y="40.55" width="4.2" height="2.6" rx=".6" fill="#5b7ab8"/><rect x="78.50" y="42.35" width="4.2" height="1.1" rx=".4" fill="#3c4a66"/><rect x="83.60" y="40.55" width="4.2" height="2.6" rx=".6" fill="#5b7ab8"/><rect x="83.60" y="42.35" width="4.2" height="1.1" rx=".4" fill="#3c4a66"/><ellipse cx="96.60" cy="29.60" rx="2.1" ry="1.4" fill="#fafafa" stroke="#8e8e8e" stroke-width=".6"/><ellipse cx="102.30" cy="29.60" rx="2.1" ry="1.4" fill="#fafafa" stroke="#8e8e8e" stroke-width=".6"/><ellipse cx="108.00" cy="29.60" rx="2.1" ry="1.4" fill="#fafafa" stroke="#8e8e8e" stroke-width=".6"/><ellipse cx="96.60" cy="33.85" rx="2.1" ry="1.4" fill="#fafafa" stroke="#8e8e8e" stroke-width=".6"/><ellipse cx="102.30" cy="33.85" rx="2.1" ry="1.4" fill="#fafafa" stroke="#8e8e8e" stroke-width=".6"/><ellipse cx="108.00" cy="33.85" rx="2.1" ry="1.4" fill="#fafafa" stroke="#8e8e8e" stroke-width=".6"/><ellipse cx="96.60" cy="38.10" rx="2.1" ry="1.4" fill="#fafafa" stroke="#8e8e8e" stroke-width=".6"/><ellipse cx="102.30" cy="38.10" rx="2.1" ry="1.4" fill="#fafafa" stroke="#8e8e8e" stroke-width=".6"/><ellipse cx="108.00" cy="38.10" rx="2.1" ry="1.4" fill="#fafafa" stroke="#8e8e8e" stroke-width=".6"/><ellipse cx="96.60" cy="42.35" rx="2.1" ry="1.4" fill="#fafafa" stroke="#8e8e8e" stroke-width=".6"/><ellipse cx="102.30" cy="42.35" rx="2.1" ry="1.4" fill="#fafafa" stroke="#8e8e8e" stroke-width=".6"/><ellipse cx="108.00" cy="42.35" rx="2.1" ry="1.4" fill="#fafafa" stroke="#8e8e8e" stroke-width=".6"/><ellipse cx="96.60" cy="46.60" rx="2.1" ry="1.4" fill="#fafafa" stroke="#8e8e8e" stroke-width=".6"/><ellipse cx="102.30" cy="46.60" rx="2.1" ry="1.4" fill="#fafafa" stroke="#8e8e8e" stroke-width=".6"/><ellipse cx="108.00" cy="46.60" rx="2.1" ry="1.4" fill="#fafafa" stroke="#8e8e8e" stroke-width=".6"/><ellipse cx="78.2" cy="48.4" rx="2.3" ry="1.4" fill="#f4f4f4" stroke="#8e8e8e" stroke-width=".6"/><ellipse cx="83.4" cy="48.4" rx="2.3" ry="1.4" fill="#f4f4f4" stroke="#8e8e8e" stroke-width=".6"/><circle cx="80.7" cy="56.2" r="4.7" fill="#f2f2f2" stroke="#4a4a4a" stroke-width="1"/><circle cx="80.7" cy="55.8" r="2.4" fill="#fff"/><ellipse cx="102.9" cy="52.8" rx="2.3" ry="1.5" fill="#f2f2f2" stroke="#8a8a8a" stroke-width=".6"/><ellipse cx="97.1" cy="56.9" rx="2.3" ry="1.5" fill="#f2f2f2" stroke="#8a8a8a" stroke-width=".6"/><ellipse cx="108.4" cy="56.9" rx="2.3" ry="1.5" fill="#f2f2f2" stroke="#8a8a8a" stroke-width=".6"/><ellipse cx="102.9" cy="60.2" rx="2.3" ry="1.5" fill="#f2f2f2" stroke="#8a8a8a" stroke-width=".6"/><rect x="76.40" y="66.2" width="5" height="4.2" rx=".5" fill="#fbfbfb" stroke="#9a9a9a" stroke-width=".5"/><rect x="83.55" y="66.2" width="5" height="4.2" rx=".5" fill="#fbfbfb" stroke="#9a9a9a" stroke-width=".5"/><rect x="90.70" y="66.2" width="5" height="4.2" rx=".5" fill="#fbfbfb" stroke="#9a9a9a" stroke-width=".5"/><rect x="97.85" y="66.2" width="5" height="4.2" rx=".5" fill="#fbfbfb" stroke="#9a9a9a" stroke-width=".5"/><rect x="105.00" y="66.2" width="5" height="4.2" rx=".5" fill="#fbfbfb" stroke="#9a9a9a" stroke-width=".5"/><path d="M72.2 71.6 H114.6 L115.6 86.4 H72.2 Z" fill="#7b7b7b"/><rect x="76.40" y="74.2" width="5" height="3.5" rx=".5" fill="#f6f6f6"/><rect x="76.40" y="80.4" width="5" height="3.6" rx=".5" fill="#e2201f"/><rect x="83.55" y="74.2" width="5" height="3.5" rx=".5" fill="#f6f6f6"/><rect x="83.55" y="80.4" width="5" height="3.6" rx=".5" fill="#e2201f"/><rect x="90.70" y="74.2" width="5" height="3.5" rx=".5" fill="#f6f6f6"/><rect x="90.70" y="80.4" width="5" height="3.6" rx=".5" fill="#f6f6f6"/><rect x="97.85" y="74.2" width="5" height="3.5" rx=".5" fill="#f6f6f6"/><rect x="97.85" y="80.4" width="5" height="3.6" rx=".5" fill="#f6f6f6"/><rect x="105.00" y="74.2" width="5" height="3.5" rx=".5" fill="#f6f6f6"/><rect x="105.00" y="80.4" width="5" height="3.6" rx=".5" fill="#f6f6f6"/></svg>
<span class="t" style="left:348.6px;top:992.3px;font-size:24.4px;font-weight:300;color:#e2e2e6;letter-spacing:0.3px;">老唱片挖掘者</span>
<svg style="left:346.00px;top:1043.98px" width="40" height="42" viewBox="0 0 40 42"><path d="M3.2 11.6 H12.6 L25.6 2.4 Q27.8 1.2 27.8 3.8 V36 Q27.8 38.6 25.6 37.2 L12.6 28.6 H3.2 Q1.9 28.6 1.9 27.2 V13 Q1.9 11.6 3.2 11.6Z" fill="#dedee4"/><path d="M1.2 4.6 L34.6 38.4" stroke="#28282c" stroke-width="8.2" stroke-linecap="round"/><path d="M1.2 4.6 L34.6 38.4" stroke="#e6e6ec" stroke-width="3.1" stroke-linecap="round"/></svg>
<svg style="left:424.00px;top:1041.48px" width="48" height="46" viewBox="0 0 48 46"><path d="M4.5 33.6 V23.6 A19.4 19.4 0 0 1 43.3 23.6 V33.6" fill="none" stroke="#ffd60a" stroke-width="3.7" stroke-linecap="butt"/><rect x="8.3" y="25.6" width="8.1" height="16.8" rx="3" fill="#ffd60a"/><rect x="31.7" y="25.6" width="8.1" height="16.8" rx="3" fill="#ffd60a"/></svg>
<div style="left:516.60px;top:1053.78px;width:271.40px;height:22.40px;background:#1b1b1d;border-radius:11.2px;"></div>
<div style="left:629.40px;top:1046.38px;width:37.2px;height:37.2px;border-radius:50%;background:#48484b;box-shadow:inset 0 0 0 1.8px #d8d8dc,0 0 0 1.2px rgba(10,10,12,.5);"></div>
<svg style="left:820.00px;top:985.58px" width="140" height="120" viewBox="0 0 140 120"><defs><linearGradient id="mg2" x1="0" y1="0" x2="0" y2="1"><stop offset="0" stop-color="#8e8e8e"/><stop offset="1" stop-color="#6a6a6a"/></linearGradient><linearGradient id="mb2" x1="0" y1="0" x2="1" y2="1"><stop offset="0" stop-color="#f4f4f4"/><stop offset="1" stop-color="#dcdcdc"/></linearGradient></defs><path d="M15 101 H122 L123 105.5 H14 Z" fill="#161618" opacity=".8"/><path d="M15.4 90.5 H120.8 L121.8 103.4 H14.8 Z" fill="url(#mg2)"/><path d="M18.7 15.2 H117.2 L120.9 90.8 H15.3 Z" fill="#b9b9b9"/><path d="M20.2 16.6 H115.8 L119.2 89.2 H17 Z" fill="url(#mb2)"/><rect x="73.70" y="17.9" width="7.1" height="5.4" fill="#b2b2b2"/><rect x="83.55" y="17.9" width="7.1" height="5.4" fill="#b2b2b2"/><rect x="93.40" y="17.9" width="7.1" height="5.4" fill="#b2b2b2"/><rect x="103.25" y="17.9" width="7.1" height="5.4" fill="#b2b2b2"/><rect x="32.9" y="23.6" width="38" height="19.4" rx="1" fill="#7d7d7d"/><rect x="34.2" y="26.6" width="35" height="14.3" fill="#151518"/><rect x="40.4" y="30" width="22.2" height="7.6" fill="#1f8bf2"/><ellipse cx="39.60" cy="45.5" rx="2.2" ry="1.2" fill="#c9c9c9" stroke="#8f8f8f" stroke-width=".5"/><ellipse cx="47.55" cy="45.5" rx="2.2" ry="1.2" fill="#c9c9c9" stroke="#8f8f8f" stroke-width=".5"/><ellipse cx="55.50" cy="45.5" rx="2.2" ry="1.2" fill="#c9c9c9" stroke="#8f8f8f" stroke-width=".5"/><ellipse cx="63.45" cy="45.5" rx="2.2" ry="1.2" fill="#c9c9c9" stroke="#8f8f8f" stroke-width=".5"/><circle cx="27.4" cy="26.8" r="2.2" fill="#2c4a3c"/><circle cx="27.2" cy="32.2" r="2.2" fill="#c23a4a"/><circle cx="27.2" cy="40.4" r="1.7" fill="#9a9a9a"/><ellipse cx="26.4" cy="53.2" rx="2.4" ry="1.7" fill="#f6f6f6" stroke="#8a8a8a" stroke-width=".7"/><ellipse cx="26.4" cy="57.6" rx="2.4" ry="1.7" fill="#f6f6f6" stroke="#8a8a8a" stroke-width=".7"/><ellipse cx="26.4" cy="62.2" rx="2.4" ry="1.7" fill="#f6f6f6" stroke="#8a8a8a" stroke-width=".7"/><ellipse cx="26.4" cy="68.2" rx="2.4" ry="1.7" fill="#f6f6f6" stroke="#8a8a8a" stroke-width=".7"/><ellipse cx="26.4" cy="72.6" rx="2.4" ry="1.7" fill="#f6f6f6" stroke="#8a8a8a" stroke-width=".7"/><rect x="25.3" y="77" width="1.6" height="9" rx=".8" fill="#2a2a2a"/><circle cx="26" cy="79.6" r="1.5" fill="#d8d8d8" stroke="#777" stroke-width=".4"/><rect x="34" y="50" width="34" height="35.9" rx=".8" fill="#565656"/><rect x="35.50" y="51.60" width="6.9" height="7.1" rx=".5" fill="#8f8f8f"/><rect x="43.50" y="51.60" width="6.9" height="7.1" rx=".5" fill="#8f8f8f"/><rect x="51.50" y="51.60" width="6.9" height="7.1" rx=".5" fill="#8f8f8f"/><rect x="59.50" y="51.60" width="6.9" height="7.1" rx=".5" fill="#8f8f8f"/><rect x="35.50" y="60.05" width="6.9" height="7.1" rx=".5" fill="#8f8f8f"/><rect x="43.50" y="60.05" width="6.9" height="7.1" rx=".5" fill="#8f8f8f"/><rect x="51.50" y="60.05" width="6.9" height="7.1" rx=".5" fill="#8f8f8f"/><rect x="59.50" y="60.05" width="6.9" height="7.1" rx=".5" fill="#8f8f8f"/><rect x="35.50" y="68.50" width="6.9" height="7.1" rx=".5" fill="#8f8f8f"/><rect x="43.50" y="68.50" width="6.9" height="7.1" rx=".5" fill="#8f8f8f"/><rect x="51.50" y="68.50" width="6.9" height="7.1" rx=".5" fill="#8f8f8f"/><rect x="59.50" y="68.50" width="6.9" height="7.1" rx=".5" fill="#8f8f8f"/><rect x="35.50" y="76.95" width="6.9" height="7.1" rx=".5" fill="#8f8f8f"/><rect x="43.50" y="76.95" width="6.9" height="7.1" rx=".5" fill="#8f8f8f"/><rect x="51.50" y="76.95" width="6.9" height="7.1" rx=".5" fill="#8f8f8f"/><rect x="59.50" y="76.95" width="6.9" height="7.1" rx=".5" fill="#8f8f8f"/><rect x="73.40" y="28.40" width="4.2" height="2.6" rx=".6" fill="#5b7ab8"/><rect x="73.40" y="30.20" width="4.2" height="1.1" rx=".4" fill="#3c4a66"/><rect x="78.50" y="28.40" width="4.2" height="2.6" rx=".6" fill="#5b7ab8"/><rect x="78.50" y="30.20" width="4.2" height="1.1" rx=".4" fill="#3c4a66"/><rect x="83.60" y="28.40" width="4.2" height="2.6" rx=".6" fill="#5b7ab8"/><rect x="83.60" y="30.20" width="4.2" height="1.1" rx=".4" fill="#3c4a66"/><rect x="73.40" y="32.45" width="4.2" height="2.6" rx=".6" fill="#5b7ab8"/><rect x="73.40" y="34.25" width="4.2" height="1.1" rx=".4" fill="#3c4a66"/><rect x="78.50" y="32.45" width="4.2" height="2.6" rx=".6" fill="#5b7ab8"/><rect x="78.50" y="34.25" width="4.2" height="1.1" rx=".4" fill="#3c4a66"/><rect x="83.60" y="32.45" width="4.2" height="2.6" rx=".6" fill="#5b7ab8"/><rect x="83.60" y="34.25" width="4.2" height="1.1" rx=".4" fill="#3c4a66"/><rect x="73.40" y="36.50" width="4.2" height="2.6" rx=".6" fill="#5b7ab8"/><rect x="73.40" y="38.30" width="4.2" height="1.1" rx=".4" fill="#3c4a66"/><rect x="78.50" y="36.50" width="4.2" height="2.6" rx=".6" fill="#5b7ab8"/><rect x="78.50" y="38.30" width="4.2" height="1.1" rx=".4" fill="#3c4a66"/><rect x="83.60" y="36.50" width="4.2" height="2.6" rx=".6" fill="#5b7ab8"/><rect x="83.60" y="38.30" width="4.2" height="1.1" rx=".4" fill="#3c4a66"/><rect x="73.40" y="40.55" width="4.2" height="2.6" rx=".6" fill="#5b7ab8"/><rect x="73.40" y="42.35" width="4.2" height="1.1" rx=".4" fill="#3c4a66"/><rect x="78.50" y="40.55" width="4.2" height="2.6" rx=".6" fill="#5b7ab8"/><rect x="78.50" y="42.35" width="4.2" height="1.1" rx=".4" fill="#3c4a66"/><rect x="83.60" y="40.55" width="4.2" height="2.6" rx=".6" fill="#5b7ab8"/><rect x="83.60" y="42.35" width="4.2" height="1.1" rx=".4" fill="#3c4a66"/><ellipse cx="96.60" cy="29.60" rx="2.1" ry="1.4" fill="#fafafa" stroke="#8e8e8e" stroke-width=".6"/><ellipse cx="102.30" cy="29.60" rx="2.1" ry="1.4" fill="#fafafa" stroke="#8e8e8e" stroke-width=".6"/><ellipse cx="108.00" cy="29.60" rx="2.1" ry="1.4" fill="#fafafa" stroke="#8e8e8e" stroke-width=".6"/><ellipse cx="96.60" cy="33.85" rx="2.1" ry="1.4" fill="#fafafa" stroke="#8e8e8e" stroke-width=".6"/><ellipse cx="102.30" cy="33.85" rx="2.1" ry="1.4" fill="#fafafa" stroke="#8e8e8e" stroke-width=".6"/><ellipse cx="108.00" cy="33.85" rx="2.1" ry="1.4" fill="#fafafa" stroke="#8e8e8e" stroke-width=".6"/><ellipse cx="96.60" cy="38.10" rx="2.1" ry="1.4" fill="#fafafa" stroke="#8e8e8e" stroke-width=".6"/><ellipse cx="102.30" cy="38.10" rx="2.1" ry="1.4" fill="#fafafa" stroke="#8e8e8e" stroke-width=".6"/><ellipse cx="108.00" cy="38.10" rx="2.1" ry="1.4" fill="#fafafa" stroke="#8e8e8e" stroke-width=".6"/><ellipse cx="96.60" cy="42.35" rx="2.1" ry="1.4" fill="#fafafa" stroke="#8e8e8e" stroke-width=".6"/><ellipse cx="102.30" cy="42.35" rx="2.1" ry="1.4" fill="#fafafa" stroke="#8e8e8e" stroke-width=".6"/><ellipse cx="108.00" cy="42.35" rx="2.1" ry="1.4" fill="#fafafa" stroke="#8e8e8e" stroke-width=".6"/><ellipse cx="96.60" cy="46.60" rx="2.1" ry="1.4" fill="#fafafa" stroke="#8e8e8e" stroke-width=".6"/><ellipse cx="102.30" cy="46.60" rx="2.1" ry="1.4" fill="#fafafa" stroke="#8e8e8e" stroke-width=".6"/><ellipse cx="108.00" cy="46.60" rx="2.1" ry="1.4" fill="#fafafa" stroke="#8e8e8e" stroke-width=".6"/><ellipse cx="78.2" cy="48.4" rx="2.3" ry="1.4" fill="#f4f4f4" stroke="#8e8e8e" stroke-width=".6"/><ellipse cx="83.4" cy="48.4" rx="2.3" ry="1.4" fill="#f4f4f4" stroke="#8e8e8e" stroke-width=".6"/><circle cx="80.7" cy="56.2" r="4.7" fill="#f2f2f2" stroke="#4a4a4a" stroke-width="1"/><circle cx="80.7" cy="55.8" r="2.4" fill="#fff"/><ellipse cx="102.9" cy="52.8" rx="2.3" ry="1.5" fill="#f2f2f2" stroke="#8a8a8a" stroke-width=".6"/><ellipse cx="97.1" cy="56.9" rx="2.3" ry="1.5" fill="#f2f2f2" stroke="#8a8a8a" stroke-width=".6"/><ellipse cx="108.4" cy="56.9" rx="2.3" ry="1.5" fill="#f2f2f2" stroke="#8a8a8a" stroke-width=".6"/><ellipse cx="102.9" cy="60.2" rx="2.3" ry="1.5" fill="#f2f2f2" stroke="#8a8a8a" stroke-width=".6"/><rect x="76.40" y="66.2" width="5" height="4.2" rx=".5" fill="#fbfbfb" stroke="#9a9a9a" stroke-width=".5"/><rect x="83.55" y="66.2" width="5" height="4.2" rx=".5" fill="#fbfbfb" stroke="#9a9a9a" stroke-width=".5"/><rect x="90.70" y="66.2" width="5" height="4.2" rx=".5" fill="#fbfbfb" stroke="#9a9a9a" stroke-width=".5"/><rect x="97.85" y="66.2" width="5" height="4.2" rx=".5" fill="#fbfbfb" stroke="#9a9a9a" stroke-width=".5"/><rect x="105.00" y="66.2" width="5" height="4.2" rx=".5" fill="#fbfbfb" stroke="#9a9a9a" stroke-width=".5"/><path d="M72.2 71.6 H114.6 L115.6 86.4 H72.2 Z" fill="#7b7b7b"/><rect x="76.40" y="74.2" width="5" height="3.5" rx=".5" fill="#f6f6f6"/><rect x="76.40" y="80.4" width="5" height="3.6" rx=".5" fill="#e2201f"/><rect x="83.55" y="74.2" width="5" height="3.5" rx=".5" fill="#f6f6f6"/><rect x="83.55" y="80.4" width="5" height="3.6" rx=".5" fill="#e2201f"/><rect x="90.70" y="74.2" width="5" height="3.5" rx=".5" fill="#f6f6f6"/><rect x="90.70" y="80.4" width="5" height="3.6" rx=".5" fill="#f6f6f6"/><rect x="97.85" y="74.2" width="5" height="3.5" rx=".5" fill="#f6f6f6"/><rect x="97.85" y="80.4" width="5" height="3.6" rx=".5" fill="#f6f6f6"/><rect x="105.00" y="74.2" width="5" height="3.5" rx=".5" fill="#f6f6f6"/><rect x="105.00" y="80.4" width="5" height="3.6" rx=".5" fill="#f6f6f6"/></svg>
<span class="t" style="left:348.6px;top:1147.9px;font-size:24.4px;font-weight:300;color:#e2e2e6;letter-spacing:0.3px;">电子门</span>
<svg style="left:346.00px;top:1199.61px" width="40" height="42" viewBox="0 0 40 42"><path d="M3.2 11.6 H12.6 L25.6 2.4 Q27.8 1.2 27.8 3.8 V36 Q27.8 38.6 25.6 37.2 L12.6 28.6 H3.2 Q1.9 28.6 1.9 27.2 V13 Q1.9 11.6 3.2 11.6Z" fill="#dedee4"/><path d="M1.2 4.6 L34.6 38.4" stroke="#28282c" stroke-width="8.2" stroke-linecap="round"/><path d="M1.2 4.6 L34.6 38.4" stroke="#e6e6ec" stroke-width="3.1" stroke-linecap="round"/></svg>
<svg style="left:424.00px;top:1197.11px" width="48" height="46" viewBox="0 0 48 46"><path d="M4.5 33.6 V23.6 A19.4 19.4 0 0 1 43.3 23.6 V33.6" fill="none" stroke="#ffd60a" stroke-width="3.7" stroke-linecap="butt"/><rect x="8.3" y="25.6" width="8.1" height="16.8" rx="3" fill="#ffd60a"/><rect x="31.7" y="25.6" width="8.1" height="16.8" rx="3" fill="#ffd60a"/></svg>
<div style="left:516.60px;top:1209.41px;width:271.40px;height:22.40px;background:#1b1b1d;border-radius:11.2px;"></div>
<div style="left:653.90px;top:1202.01px;width:37.2px;height:37.2px;border-radius:50%;background:#48484b;box-shadow:inset 0 0 0 1.8px #d8d8dc,0 0 0 1.2px rgba(10,10,12,.5);"></div>
<svg style="left:820.00px;top:1141.21px" width="140" height="120" viewBox="0 0 140 120"><defs><linearGradient id="mg3" x1="0" y1="0" x2="0" y2="1"><stop offset="0" stop-color="#8e8e8e"/><stop offset="1" stop-color="#6a6a6a"/></linearGradient><linearGradient id="mb3" x1="0" y1="0" x2="1" y2="1"><stop offset="0" stop-color="#f4f4f4"/><stop offset="1" stop-color="#dcdcdc"/></linearGradient></defs><path d="M15 101 H122 L123 105.5 H14 Z" fill="#161618" opacity=".8"/><path d="M15.4 90.5 H120.8 L121.8 103.4 H14.8 Z" fill="url(#mg3)"/><path d="M18.7 15.2 H117.2 L120.9 90.8 H15.3 Z" fill="#b9b9b9"/><path d="M20.2 16.6 H115.8 L119.2 89.2 H17 Z" fill="url(#mb3)"/><rect x="73.70" y="17.9" width="7.1" height="5.4" fill="#b2b2b2"/><rect x="83.55" y="17.9" width="7.1" height="5.4" fill="#b2b2b2"/><rect x="93.40" y="17.9" width="7.1" height="5.4" fill="#b2b2b2"/><rect x="103.25" y="17.9" width="7.1" height="5.4" fill="#b2b2b2"/><rect x="32.9" y="23.6" width="38" height="19.4" rx="1" fill="#7d7d7d"/><rect x="34.2" y="26.6" width="35" height="14.3" fill="#151518"/><rect x="40.4" y="30" width="22.2" height="7.6" fill="#1f8bf2"/><ellipse cx="39.60" cy="45.5" rx="2.2" ry="1.2" fill="#c9c9c9" stroke="#8f8f8f" stroke-width=".5"/><ellipse cx="47.55" cy="45.5" rx="2.2" ry="1.2" fill="#c9c9c9" stroke="#8f8f8f" stroke-width=".5"/><ellipse cx="55.50" cy="45.5" rx="2.2" ry="1.2" fill="#c9c9c9" stroke="#8f8f8f" stroke-width=".5"/><ellipse cx="63.45" cy="45.5" rx="2.2" ry="1.2" fill="#c9c9c9" stroke="#8f8f8f" stroke-width=".5"/><circle cx="27.4" cy="26.8" r="2.2" fill="#2c4a3c"/><circle cx="27.2" cy="32.2" r="2.2" fill="#c23a4a"/><circle cx="27.2" cy="40.4" r="1.7" fill="#9a9a9a"/><ellipse cx="26.4" cy="53.2" rx="2.4" ry="1.7" fill="#f6f6f6" stroke="#8a8a8a" stroke-width=".7"/><ellipse cx="26.4" cy="57.6" rx="2.4" ry="1.7" fill="#f6f6f6" stroke="#8a8a8a" stroke-width=".7"/><ellipse cx="26.4" cy="62.2" rx="2.4" ry="1.7" fill="#f6f6f6" stroke="#8a8a8a" stroke-width=".7"/><ellipse cx="26.4" cy="68.2" rx="2.4" ry="1.7" fill="#f6f6f6" stroke="#8a8a8a" stroke-width=".7"/><ellipse cx="26.4" cy="72.6" rx="2.4" ry="1.7" fill="#f6f6f6" stroke="#8a8a8a" stroke-width=".7"/><rect x="25.3" y="77" width="1.6" height="9" rx=".8" fill="#2a2a2a"/><circle cx="26" cy="79.6" r="1.5" fill="#d8d8d8" stroke="#777" stroke-width=".4"/><rect x="34" y="50" width="34" height="35.9" rx=".8" fill="#565656"/><rect x="35.50" y="51.60" width="6.9" height="7.1" rx=".5" fill="#8f8f8f"/><rect x="43.50" y="51.60" width="6.9" height="7.1" rx=".5" fill="#8f8f8f"/><rect x="51.50" y="51.60" width="6.9" height="7.1" rx=".5" fill="#8f8f8f"/><rect x="59.50" y="51.60" width="6.9" height="7.1" rx=".5" fill="#8f8f8f"/><rect x="35.50" y="60.05" width="6.9" height="7.1" rx=".5" fill="#8f8f8f"/><rect x="43.50" y="60.05" width="6.9" height="7.1" rx=".5" fill="#8f8f8f"/><rect x="51.50" y="60.05" width="6.9" height="7.1" rx=".5" fill="#8f8f8f"/><rect x="59.50" y="60.05" width="6.9" height="7.1" rx=".5" fill="#8f8f8f"/><rect x="35.50" y="68.50" width="6.9" height="7.1" rx=".5" fill="#8f8f8f"/><rect x="43.50" y="68.50" width="6.9" height="7.1" rx=".5" fill="#8f8f8f"/><rect x="51.50" y="68.50" width="6.9" height="7.1" rx=".5" fill="#8f8f8f"/><rect x="59.50" y="68.50" width="6.9" height="7.1" rx=".5" fill="#8f8f8f"/><rect x="35.50" y="76.95" width="6.9" height="7.1" rx=".5" fill="#8f8f8f"/><rect x="43.50" y="76.95" width="6.9" height="7.1" rx=".5" fill="#8f8f8f"/><rect x="51.50" y="76.95" width="6.9" height="7.1" rx=".5" fill="#8f8f8f"/><rect x="59.50" y="76.95" width="6.9" height="7.1" rx=".5" fill="#8f8f8f"/><rect x="73.40" y="28.40" width="4.2" height="2.6" rx=".6" fill="#5b7ab8"/><rect x="73.40" y="30.20" width="4.2" height="1.1" rx=".4" fill="#3c4a66"/><rect x="78.50" y="28.40" width="4.2" height="2.6" rx=".6" fill="#5b7ab8"/><rect x="78.50" y="30.20" width="4.2" height="1.1" rx=".4" fill="#3c4a66"/><rect x="83.60" y="28.40" width="4.2" height="2.6" rx=".6" fill="#5b7ab8"/><rect x="83.60" y="30.20" width="4.2" height="1.1" rx=".4" fill="#3c4a66"/><rect x="73.40" y="32.45" width="4.2" height="2.6" rx=".6" fill="#5b7ab8"/><rect x="73.40" y="34.25" width="4.2" height="1.1" rx=".4" fill="#3c4a66"/><rect x="78.50" y="32.45" width="4.2" height="2.6" rx=".6" fill="#5b7ab8"/><rect x="78.50" y="34.25" width="4.2" height="1.1" rx=".4" fill="#3c4a66"/><rect x="83.60" y="32.45" width="4.2" height="2.6" rx=".6" fill="#5b7ab8"/><rect x="83.60" y="34.25" width="4.2" height="1.1" rx=".4" fill="#3c4a66"/><rect x="73.40" y="36.50" width="4.2" height="2.6" rx=".6" fill="#5b7ab8"/><rect x="73.40" y="38.30" width="4.2" height="1.1" rx=".4" fill="#3c4a66"/><rect x="78.50" y="36.50" width="4.2" height="2.6" rx=".6" fill="#5b7ab8"/><rect x="78.50" y="38.30" width="4.2" height="1.1" rx=".4" fill="#3c4a66"/><rect x="83.60" y="36.50" width="4.2" height="2.6" rx=".6" fill="#5b7ab8"/><rect x="83.60" y="38.30" width="4.2" height="1.1" rx=".4" fill="#3c4a66"/><rect x="73.40" y="40.55" width="4.2" height="2.6" rx=".6" fill="#5b7ab8"/><rect x="73.40" y="42.35" width="4.2" height="1.1" rx=".4" fill="#3c4a66"/><rect x="78.50" y="40.55" width="4.2" height="2.6" rx=".6" fill="#5b7ab8"/><rect x="78.50" y="42.35" width="4.2" height="1.1" rx=".4" fill="#3c4a66"/><rect x="83.60" y="40.55" width="4.2" height="2.6" rx=".6" fill="#5b7ab8"/><rect x="83.60" y="42.35" width="4.2" height="1.1" rx=".4" fill="#3c4a66"/><ellipse cx="96.60" cy="29.60" rx="2.1" ry="1.4" fill="#fafafa" stroke="#8e8e8e" stroke-width=".6"/><ellipse cx="102.30" cy="29.60" rx="2.1" ry="1.4" fill="#fafafa" stroke="#8e8e8e" stroke-width=".6"/><ellipse cx="108.00" cy="29.60" rx="2.1" ry="1.4" fill="#fafafa" stroke="#8e8e8e" stroke-width=".6"/><ellipse cx="96.60" cy="33.85" rx="2.1" ry="1.4" fill="#fafafa" stroke="#8e8e8e" stroke-width=".6"/><ellipse cx="102.30" cy="33.85" rx="2.1" ry="1.4" fill="#fafafa" stroke="#8e8e8e" stroke-width=".6"/><ellipse cx="108.00" cy="33.85" rx="2.1" ry="1.4" fill="#fafafa" stroke="#8e8e8e" stroke-width=".6"/><ellipse cx="96.60" cy="38.10" rx="2.1" ry="1.4" fill="#fafafa" stroke="#8e8e8e" stroke-width=".6"/><ellipse cx="102.30" cy="38.10" rx="2.1" ry="1.4" fill="#fafafa" stroke="#8e8e8e" stroke-width=".6"/><ellipse cx="108.00" cy="38.10" rx="2.1" ry="1.4" fill="#fafafa" stroke="#8e8e8e" stroke-width=".6"/><ellipse cx="96.60" cy="42.35" rx="2.1" ry="1.4" fill="#fafafa" stroke="#8e8e8e" stroke-width=".6"/><ellipse cx="102.30" cy="42.35" rx="2.1" ry="1.4" fill="#fafafa" stroke="#8e8e8e" stroke-width=".6"/><ellipse cx="108.00" cy="42.35" rx="2.1" ry="1.4" fill="#fafafa" stroke="#8e8e8e" stroke-width=".6"/><ellipse cx="96.60" cy="46.60" rx="2.1" ry="1.4" fill="#fafafa" stroke="#8e8e8e" stroke-width=".6"/><ellipse cx="102.30" cy="46.60" rx="2.1" ry="1.4" fill="#fafafa" stroke="#8e8e8e" stroke-width=".6"/><ellipse cx="108.00" cy="46.60" rx="2.1" ry="1.4" fill="#fafafa" stroke="#8e8e8e" stroke-width=".6"/><ellipse cx="78.2" cy="48.4" rx="2.3" ry="1.4" fill="#f4f4f4" stroke="#8e8e8e" stroke-width=".6"/><ellipse cx="83.4" cy="48.4" rx="2.3" ry="1.4" fill="#f4f4f4" stroke="#8e8e8e" stroke-width=".6"/><circle cx="80.7" cy="56.2" r="4.7" fill="#f2f2f2" stroke="#4a4a4a" stroke-width="1"/><circle cx="80.7" cy="55.8" r="2.4" fill="#fff"/><ellipse cx="102.9" cy="52.8" rx="2.3" ry="1.5" fill="#f2f2f2" stroke="#8a8a8a" stroke-width=".6"/><ellipse cx="97.1" cy="56.9" rx="2.3" ry="1.5" fill="#f2f2f2" stroke="#8a8a8a" stroke-width=".6"/><ellipse cx="108.4" cy="56.9" rx="2.3" ry="1.5" fill="#f2f2f2" stroke="#8a8a8a" stroke-width=".6"/><ellipse cx="102.9" cy="60.2" rx="2.3" ry="1.5" fill="#f2f2f2" stroke="#8a8a8a" stroke-width=".6"/><rect x="76.40" y="66.2" width="5" height="4.2" rx=".5" fill="#fbfbfb" stroke="#9a9a9a" stroke-width=".5"/><rect x="83.55" y="66.2" width="5" height="4.2" rx=".5" fill="#fbfbfb" stroke="#9a9a9a" stroke-width=".5"/><rect x="90.70" y="66.2" width="5" height="4.2" rx=".5" fill="#fbfbfb" stroke="#9a9a9a" stroke-width=".5"/><rect x="97.85" y="66.2" width="5" height="4.2" rx=".5" fill="#fbfbfb" stroke="#9a9a9a" stroke-width=".5"/><rect x="105.00" y="66.2" width="5" height="4.2" rx=".5" fill="#fbfbfb" stroke="#9a9a9a" stroke-width=".5"/><path d="M72.2 71.6 H114.6 L115.6 86.4 H72.2 Z" fill="#7b7b7b"/><rect x="76.40" y="74.2" width="5" height="3.5" rx=".5" fill="#f6f6f6"/><rect x="76.40" y="80.4" width="5" height="3.6" rx=".5" fill="#e2201f"/><rect x="83.55" y="74.2" width="5" height="3.5" rx=".5" fill="#f6f6f6"/><rect x="83.55" y="80.4" width="5" height="3.6" rx=".5" fill="#e2201f"/><rect x="90.70" y="74.2" width="5" height="3.5" rx=".5" fill="#f6f6f6"/><rect x="90.70" y="80.4" width="5" height="3.6" rx=".5" fill="#f6f6f6"/><rect x="97.85" y="74.2" width="5" height="3.5" rx=".5" fill="#f6f6f6"/><rect x="97.85" y="80.4" width="5" height="3.6" rx=".5" fill="#f6f6f6"/><rect x="105.00" y="74.2" width="5" height="3.5" rx=".5" fill="#f6f6f6"/><rect x="105.00" y="80.4" width="5" height="3.6" rx=".5" fill="#f6f6f6"/></svg>
<span class="t" style="left:348.6px;top:1303.5px;font-size:24.4px;font-weight:300;color:#e2e2e6;letter-spacing:0.3px;">节拍</span>
<svg style="left:346.00px;top:1355.24px" width="40" height="42" viewBox="0 0 40 42"><path d="M3.2 11.6 H12.6 L25.6 2.4 Q27.8 1.2 27.8 3.8 V36 Q27.8 38.6 25.6 37.2 L12.6 28.6 H3.2 Q1.9 28.6 1.9 27.2 V13 Q1.9 11.6 3.2 11.6Z" fill="#dedee4"/><path d="M1.2 4.6 L34.6 38.4" stroke="#28282c" stroke-width="8.2" stroke-linecap="round"/><path d="M1.2 4.6 L34.6 38.4" stroke="#e6e6ec" stroke-width="3.1" stroke-linecap="round"/></svg>
<svg style="left:424.00px;top:1352.74px" width="48" height="46" viewBox="0 0 48 46"><path d="M4.5 33.6 V23.6 A19.4 19.4 0 0 1 43.3 23.6 V33.6" fill="none" stroke="#ffd60a" stroke-width="3.7" stroke-linecap="butt"/><rect x="8.3" y="25.6" width="8.1" height="16.8" rx="3" fill="#ffd60a"/><rect x="31.7" y="25.6" width="8.1" height="16.8" rx="3" fill="#ffd60a"/></svg>
<div style="left:516.60px;top:1365.04px;width:271.40px;height:22.40px;background:#1b1b1d;border-radius:11.2px;"></div>
<div style="left:608.70px;top:1357.64px;width:37.2px;height:37.2px;border-radius:50%;background:#48484b;box-shadow:inset 0 0 0 1.8px #d8d8dc,0 0 0 1.2px rgba(10,10,12,.5);"></div>
<svg style="left:820.00px;top:1296.84px" width="140" height="120" viewBox="0 0 140 120"><defs><linearGradient id="mg4" x1="0" y1="0" x2="0" y2="1"><stop offset="0" stop-color="#8e8e8e"/><stop offset="1" stop-color="#6a6a6a"/></linearGradient><linearGradient id="mb4" x1="0" y1="0" x2="1" y2="1"><stop offset="0" stop-color="#f4f4f4"/><stop offset="1" stop-color="#dcdcdc"/></linearGradient></defs><path d="M15 101 H122 L123 105.5 H14 Z" fill="#161618" opacity=".8"/><path d="M15.4 90.5 H120.8 L121.8 103.4 H14.8 Z" fill="url(#mg4)"/><path d="M18.7 15.2 H117.2 L120.9 90.8 H15.3 Z" fill="#b9b9b9"/><path d="M20.2 16.6 H115.8 L119.2 89.2 H17 Z" fill="url(#mb4)"/><rect x="73.70" y="17.9" width="7.1" height="5.4" fill="#b2b2b2"/><rect x="83.55" y="17.9" width="7.1" height="5.4" fill="#b2b2b2"/><rect x="93.40" y="17.9" width="7.1" height="5.4" fill="#b2b2b2"/><rect x="103.25" y="17.9" width="7.1" height="5.4" fill="#b2b2b2"/><rect x="32.9" y="23.6" width="38" height="19.4" rx="1" fill="#7d7d7d"/><rect x="34.2" y="26.6" width="35" height="14.3" fill="#151518"/><rect x="40.4" y="30" width="22.2" height="7.6" fill="#1f8bf2"/><ellipse cx="39.60" cy="45.5" rx="2.2" ry="1.2" fill="#c9c9c9" stroke="#8f8f8f" stroke-width=".5"/><ellipse cx="47.55" cy="45.5" rx="2.2" ry="1.2" fill="#c9c9c9" stroke="#8f8f8f" stroke-width=".5"/><ellipse cx="55.50" cy="45.5" rx="2.2" ry="1.2" fill="#c9c9c9" stroke="#8f8f8f" stroke-width=".5"/><ellipse cx="63.45" cy="45.5" rx="2.2" ry="1.2" fill="#c9c9c9" stroke="#8f8f8f" stroke-width=".5"/><circle cx="27.4" cy="26.8" r="2.2" fill="#2c4a3c"/><circle cx="27.2" cy="32.2" r="2.2" fill="#c23a4a"/><circle cx="27.2" cy="40.4" r="1.7" fill="#9a9a9a"/><ellipse cx="26.4" cy="53.2" rx="2.4" ry="1.7" fill="#f6f6f6" stroke="#8a8a8a" stroke-width=".7"/><ellipse cx="26.4" cy="57.6" rx="2.4" ry="1.7" fill="#f6f6f6" stroke="#8a8a8a" stroke-width=".7"/><ellipse cx="26.4" cy="62.2" rx="2.4" ry="1.7" fill="#f6f6f6" stroke="#8a8a8a" stroke-width=".7"/><ellipse cx="26.4" cy="68.2" rx="2.4" ry="1.7" fill="#f6f6f6" stroke="#8a8a8a" stroke-width=".7"/><ellipse cx="26.4" cy="72.6" rx="2.4" ry="1.7" fill="#f6f6f6" stroke="#8a8a8a" stroke-width=".7"/><rect x="25.3" y="77" width="1.6" height="9" rx=".8" fill="#2a2a2a"/><circle cx="26" cy="79.6" r="1.5" fill="#d8d8d8" stroke="#777" stroke-width=".4"/><rect x="34" y="50" width="34" height="35.9" rx=".8" fill="#565656"/><rect x="35.50" y="51.60" width="6.9" height="7.1" rx=".5" fill="#8f8f8f"/><rect x="43.50" y="51.60" width="6.9" height="7.1" rx=".5" fill="#8f8f8f"/><rect x="51.50" y="51.60" width="6.9" height="7.1" rx=".5" fill="#8f8f8f"/><rect x="59.50" y="51.60" width="6.9" height="7.1" rx=".5" fill="#8f8f8f"/><rect x="35.50" y="60.05" width="6.9" height="7.1" rx=".5" fill="#8f8f8f"/><rect x="43.50" y="60.05" width="6.9" height="7.1" rx=".5" fill="#8f8f8f"/><rect x="51.50" y="60.05" width="6.9" height="7.1" rx=".5" fill="#8f8f8f"/><rect x="59.50" y="60.05" width="6.9" height="7.1" rx=".5" fill="#8f8f8f"/><rect x="35.50" y="68.50" width="6.9" height="7.1" rx=".5" fill="#8f8f8f"/><rect x="43.50" y="68.50" width="6.9" height="7.1" rx=".5" fill="#8f8f8f"/><rect x="51.50" y="68.50" width="6.9" height="7.1" rx=".5" fill="#8f8f8f"/><rect x="59.50" y="68.50" width="6.9" height="7.1" rx=".5" fill="#8f8f8f"/><rect x="35.50" y="76.95" width="6.9" height="7.1" rx=".5" fill="#8f8f8f"/><rect x="43.50" y="76.95" width="6.9" height="7.1" rx=".5" fill="#8f8f8f"/><rect x="51.50" y="76.95" width="6.9" height="7.1" rx=".5" fill="#8f8f8f"/><rect x="59.50" y="76.95" width="6.9" height="7.1" rx=".5" fill="#8f8f8f"/><rect x="73.40" y="28.40" width="4.2" height="2.6" rx=".6" fill="#5b7ab8"/><rect x="73.40" y="30.20" width="4.2" height="1.1" rx=".4" fill="#3c4a66"/><rect x="78.50" y="28.40" width="4.2" height="2.6" rx=".6" fill="#5b7ab8"/><rect x="78.50" y="30.20" width="4.2" height="1.1" rx=".4" fill="#3c4a66"/><rect x="83.60" y="28.40" width="4.2" height="2.6" rx=".6" fill="#5b7ab8"/><rect x="83.60" y="30.20" width="4.2" height="1.1" rx=".4" fill="#3c4a66"/><rect x="73.40" y="32.45" width="4.2" height="2.6" rx=".6" fill="#5b7ab8"/><rect x="73.40" y="34.25" width="4.2" height="1.1" rx=".4" fill="#3c4a66"/><rect x="78.50" y="32.45" width="4.2" height="2.6" rx=".6" fill="#5b7ab8"/><rect x="78.50" y="34.25" width="4.2" height="1.1" rx=".4" fill="#3c4a66"/><rect x="83.60" y="32.45" width="4.2" height="2.6" rx=".6" fill="#5b7ab8"/><rect x="83.60" y="34.25" width="4.2" height="1.1" rx=".4" fill="#3c4a66"/><rect x="73.40" y="36.50" width="4.2" height="2.6" rx=".6" fill="#5b7ab8"/><rect x="73.40" y="38.30" width="4.2" height="1.1" rx=".4" fill="#3c4a66"/><rect x="78.50" y="36.50" width="4.2" height="2.6" rx=".6" fill="#5b7ab8"/><rect x="78.50" y="38.30" width="4.2" height="1.1" rx=".4" fill="#3c4a66"/><rect x="83.60" y="36.50" width="4.2" height="2.6" rx=".6" fill="#5b7ab8"/><rect x="83.60" y="38.30" width="4.2" height="1.1" rx=".4" fill="#3c4a66"/><rect x="73.40" y="40.55" width="4.2" height="2.6" rx=".6" fill="#5b7ab8"/><rect x="73.40" y="42.35" width="4.2" height="1.1" rx=".4" fill="#3c4a66"/><rect x="78.50" y="40.55" width="4.2" height="2.6" rx=".6" fill="#5b7ab8"/><rect x="78.50" y="42.35" width="4.2" height="1.1" rx=".4" fill="#3c4a66"/><rect x="83.60" y="40.55" width="4.2" height="2.6" rx=".6" fill="#5b7ab8"/><rect x="83.60" y="42.35" width="4.2" height="1.1" rx=".4" fill="#3c4a66"/><ellipse cx="96.60" cy="29.60" rx="2.1" ry="1.4" fill="#fafafa" stroke="#8e8e8e" stroke-width=".6"/><ellipse cx="102.30" cy="29.60" rx="2.1" ry="1.4" fill="#fafafa" stroke="#8e8e8e" stroke-width=".6"/><ellipse cx="108.00" cy="29.60" rx="2.1" ry="1.4" fill="#fafafa" stroke="#8e8e8e" stroke-width=".6"/><ellipse cx="96.60" cy="33.85" rx="2.1" ry="1.4" fill="#fafafa" stroke="#8e8e8e" stroke-width=".6"/><ellipse cx="102.30" cy="33.85" rx="2.1" ry="1.4" fill="#fafafa" stroke="#8e8e8e" stroke-width=".6"/><ellipse cx="108.00" cy="33.85" rx="2.1" ry="1.4" fill="#fafafa" stroke="#8e8e8e" stroke-width=".6"/><ellipse cx="96.60" cy="38.10" rx="2.1" ry="1.4" fill="#fafafa" stroke="#8e8e8e" stroke-width=".6"/><ellipse cx="102.30" cy="38.10" rx="2.1" ry="1.4" fill="#fafafa" stroke="#8e8e8e" stroke-width=".6"/><ellipse cx="108.00" cy="38.10" rx="2.1" ry="1.4" fill="#fafafa" stroke="#8e8e8e" stroke-width=".6"/><ellipse cx="96.60" cy="42.35" rx="2.1" ry="1.4" fill="#fafafa" stroke="#8e8e8e" stroke-width=".6"/><ellipse cx="102.30" cy="42.35" rx="2.1" ry="1.4" fill="#fafafa" stroke="#8e8e8e" stroke-width=".6"/><ellipse cx="108.00" cy="42.35" rx="2.1" ry="1.4" fill="#fafafa" stroke="#8e8e8e" stroke-width=".6"/><ellipse cx="96.60" cy="46.60" rx="2.1" ry="1.4" fill="#fafafa" stroke="#8e8e8e" stroke-width=".6"/><ellipse cx="102.30" cy="46.60" rx="2.1" ry="1.4" fill="#fafafa" stroke="#8e8e8e" stroke-width=".6"/><ellipse cx="108.00" cy="46.60" rx="2.1" ry="1.4" fill="#fafafa" stroke="#8e8e8e" stroke-width=".6"/><ellipse cx="78.2" cy="48.4" rx="2.3" ry="1.4" fill="#f4f4f4" stroke="#8e8e8e" stroke-width=".6"/><ellipse cx="83.4" cy="48.4" rx="2.3" ry="1.4" fill="#f4f4f4" stroke="#8e8e8e" stroke-width=".6"/><circle cx="80.7" cy="56.2" r="4.7" fill="#f2f2f2" stroke="#4a4a4a" stroke-width="1"/><circle cx="80.7" cy="55.8" r="2.4" fill="#fff"/><ellipse cx="102.9" cy="52.8" rx="2.3" ry="1.5" fill="#f2f2f2" stroke="#8a8a8a" stroke-width=".6"/><ellipse cx="97.1" cy="56.9" rx="2.3" ry="1.5" fill="#f2f2f2" stroke="#8a8a8a" stroke-width=".6"/><ellipse cx="108.4" cy="56.9" rx="2.3" ry="1.5" fill="#f2f2f2" stroke="#8a8a8a" stroke-width=".6"/><ellipse cx="102.9" cy="60.2" rx="2.3" ry="1.5" fill="#f2f2f2" stroke="#8a8a8a" stroke-width=".6"/><rect x="76.40" y="66.2" width="5" height="4.2" rx=".5" fill="#fbfbfb" stroke="#9a9a9a" stroke-width=".5"/><rect x="83.55" y="66.2" width="5" height="4.2" rx=".5" fill="#fbfbfb" stroke="#9a9a9a" stroke-width=".5"/><rect x="90.70" y="66.2" width="5" height="4.2" rx=".5" fill="#fbfbfb" stroke="#9a9a9a" stroke-width=".5"/><rect x="97.85" y="66.2" width="5" height="4.2" rx=".5" fill="#fbfbfb" stroke="#9a9a9a" stroke-width=".5"/><rect x="105.00" y="66.2" width="5" height="4.2" rx=".5" fill="#fbfbfb" stroke="#9a9a9a" stroke-width=".5"/><path d="M72.2 71.6 H114.6 L115.6 86.4 H72.2 Z" fill="#7b7b7b"/><rect x="76.40" y="74.2" width="5" height="3.5" rx=".5" fill="#f6f6f6"/><rect x="76.40" y="80.4" width="5" height="3.6" rx=".5" fill="#e2201f"/><rect x="83.55" y="74.2" width="5" height="3.5" rx=".5" fill="#f6f6f6"/><rect x="83.55" y="80.4" width="5" height="3.6" rx=".5" fill="#e2201f"/><rect x="90.70" y="74.2" width="5" height="3.5" rx=".5" fill="#f6f6f6"/><rect x="90.70" y="80.4" width="5" height="3.6" rx=".5" fill="#f6f6f6"/><rect x="97.85" y="74.2" width="5" height="3.5" rx=".5" fill="#f6f6f6"/><rect x="97.85" y="80.4" width="5" height="3.6" rx=".5" fill="#f6f6f6"/><rect x="105.00" y="74.2" width="5" height="3.5" rx=".5" fill="#f6f6f6"/><rect x="105.00" y="80.4" width="5" height="3.6" rx=".5" fill="#f6f6f6"/></svg>
<div style="left:974.60px;top:787.80px;width:5.20px;height:40.50px;background:#55555a;border-radius:2.6px;"></div>
<span class="t" style="left:331.6px;top:7.8px;font-size:22px;font-weight:500;color:#fff;letter-spacing:0.1px;">上午<span style="position:static;display:inline;margin-left:3px;letter-spacing:.75px;-webkit-text-stroke:.35px #fff">10:14</span></span>
<span class="t" style="left:458.2px;top:7.8px;font-size:22px;font-weight:500;color:#fff;letter-spacing:2.15px;"><span style="position:static;display:inline;-webkit-text-stroke:.35px #fff">6</span>月<span style="position:static;display:inline;-webkit-text-stroke:.35px #fff">28</span>日周三</span>
<div style="left:1953.5px;top:8px;width:62.5px;height:22px;border-radius:9px;background:#31262a;filter:blur(1.2px);"></div>
<div style="left:1978.4px;top:11.6px;width:14.4px;height:14.4px;border-radius:50%;box-shadow:inset 0 0 0 1.8px #43383c;background:#362b2f;filter:blur(.6px);"></div>
<div style="left:2039.8px;top:11.5px;width:14.6px;height:14.6px;border-radius:50%;background:#ff9f0a;"></div>
<svg style="left:2060px;top:6px" width="30" height="26" viewBox="0 0 30 26"><path d="M3.6 9.8 A16.5 16.5 0 0 1 26.4 9.8" fill="none" stroke="#5a5a5e" stroke-width="3.4"/><path d="M7.6 14.3 A10.6 10.6 0 0 1 22.4 14.3" fill="none" stroke="#fff" stroke-width="3.3"/><path d="M15 22.4 L10.9 18.2 A5.8 5.8 0 0 1 19.1 18.2 Z" fill="#fff"/></svg>
<svg style="left:2094px;top:6px" width="26" height="26" viewBox="0 0 26 26"><path d="M21.6 9.4 A9.3 9.3 0 1 0 22.2 14.6" fill="none" stroke="#fff" stroke-width="2.1"/><path d="M17.6 10.6 L23.8 11.6 L23 5.4 Z" fill="#fff"/><rect x="9.6" y="12" width="6.8" height="5.4" rx="1" fill="#fff"/><path d="M10.9 12.4 V10.6 A2.1 2.1 0 0 1 15.1 10.6 V12.4" fill="none" stroke="#fff" stroke-width="1.5"/></svg>
<span class="t" style="left:2126.8px;top:7.8px;font-size:22.4px;font-weight:400;color:#fff;letter-spacing:1.5px;-webkit-text-stroke:.4px #fff;">26%</span>
<svg style="left:2178px;top:5px" width="58" height="28" viewBox="0 0 58 28"><rect x="3.6" y="3.6" width="44.4" height="20.6" rx="6" fill="none" stroke="#78787c" stroke-width="2"/><path d="M50.4 10.2 Q53.2 11.4 53.2 13.9 Q53.2 16.4 50.4 17.6 Z" fill="#78787c"/><rect x="6.6" y="6.6" width="9.2" height="14.6" rx="3" fill="#30d158"/><path d="M29.6 1.4 L17.6 15.4 H24.6 L22.2 26.4 L34.4 12.2 H27.2 Z" fill="#fff" stroke="#262628" stroke-width="1.4" stroke-linejoin="round" paint-order="stroke"/></svg>
<svg style="left:357px;top:55px" width="38" height="48" viewBox="0 0 38 48"><path d="M7 1.6 H18.4 V13.4 Q18.4 17.6 22.6 17.6 H35.6 V40.4 Q35.6 45.4 30.6 45.4 H7 Q2 45.4 2 40.4 V6.6 Q2 1.6 7 1.6 Z" fill="#c6c6ca"/><path d="M21.6 2.2 L35 15 H23.6 Q21.6 15 21.6 13 Z" fill="#c6c6ca"/></svg>
<div style="left:450px;top:47.2px;width:160.6px;height:62.8px;border-radius:9px;background:#1b1b1d;"></div>
<div style="left:528.6px;top:47.2px;width:1.6px;height:62.8px;background:#2a2a2d;"></div>
<svg style="left:452px;top:60px" width="74" height="38" viewBox="452 60 74 38"><rect x="457" y="72.7" width="12.6" height="11.6" rx="2.6" fill="none" stroke="#c6c6ca" stroke-width="2.1"/><rect x="475.4" y="65.6" width="25.8" height="25.6" rx="4.2" fill="none" stroke="#c6c6ca" stroke-width="2.3"/><rect x="507.8" y="72.7" width="12.6" height="11.6" rx="2.6" fill="none" stroke="#c6c6ca" stroke-width="2.1"/></svg>
<svg style="left:552px;top:54px" width="40" height="50" viewBox="552 54 40 50"><rect x="564.7" y="57.4" width="13.3" height="28" rx="6.65" fill="#c6c6ca"/><path d="M558.8 75 V78 A12.55 12.55 0 0 0 583.9 78 V75" fill="none" stroke="#c6c6ca" stroke-width="2.3" stroke-linecap="round"/><path d="M571.35 90.6 V98.6 M561.6 98.9 H581.2" stroke="#c6c6ca" stroke-width="2.3" stroke-linecap="round"/></svg>
<div style="left:650.6px;top:47.2px;width:160.8px;height:62.8px;border-radius:9px;background:#1b1b1d;"></div>
<div style="left:728.6px;top:47.2px;width:1.6px;height:62.8px;background:#2a2a2d;"></div>
<svg style="left:664px;top:58px" width="50" height="42" viewBox="664 58 50 42"><g stroke="#c6c6ca" stroke-width="2.3" stroke-linecap="round" fill="none"><path d="M674.9 62.6 V80 M674.9 89.6 V95.6"/><circle cx="674.9" cy="84.8" r="3.6"/><path d="M688.7 62.6 V68 M688.7 77.6 V95.6"/><circle cx="688.7" cy="72.8" r="3.6"/><path d="M702.5 62.6 V80 M702.5 89.6 V95.6"/><circle cx="702.5" cy="84.8" r="3.6"/></g></svg>
<span class="t" style="left:742.6px;top:64.6px;font-size:27.6px;font-weight:500;color:#c6c6ca;">效果</span>
<div style="left:1117.2px;top:47px;width:327.4px;height:63.2px;border-radius:9px;background:#1b1b1d;"></div>
<div style="left:1214.2px;top:47px;width:1.6px;height:63.2px;background:#2a2a2d;"></div>
<div style="left:1345.4px;top:47px;width:1.6px;height:63.2px;background:#2a2a2d;"></div>
<svg style="left:1140px;top:56px" width="50" height="46" viewBox="1140 56 50 46"><rect x="1145.1" y="60.9" width="8.8" height="35.6" rx="1.4" fill="#c6c6ca"/><path d="M1153.6 78.7 L1181.4 61.6 Q1183.4 60.6 1183.4 63 V94.4 Q1183.4 96.8 1181.4 95.8 Z" fill="#c6c6ca"/></svg>
<svg style="left:1260px;top:56px" width="44" height="46" viewBox="1260 56 44 46"><path d="M1265 61.4 Q1265 58.6 1267.4 60 L1298 77.4 Q1299.8 78.9 1298 80.4 L1267.4 97.8 Q1265 99.2 1265 96.4 Z" fill="#c6c6ca"/></svg>
<div style="left:1374.2px;top:57.3px;width:43.8px;height:43.8px;border-radius:50%;background:#ff3b30;"></div>
<div style="left:1497.8px;top:67.6px;width:271.4px;height:22.2px;border-radius:11.1px;background:#1b1b1d;"></div>
<div style="left:1615.7px;top:60.1px;width:37.2px;height:37.2px;border-radius:50%;background:#48484b;box-shadow:inset 0 0 0 1.8px #d8d8dc,0 0 0 1.2px rgba(10,10,12,.5);"></div>
<svg style="left:1814px;top:54px" width="50" height="50" viewBox="1814 54 50 50"><g fill="none" stroke="#c6c6ca" stroke-width="2.9" stroke-linecap="round" stroke-linejoin="round"><path d="M1836.2 63.4 Q1839 58.6 1841.8 63.4 L1856.4 93.2 Q1857.6 97 1853.6 97 H1824.4 Q1820.4 97 1821.6 93.2 Z"/><path d="M1824.6 88.4 H1853.4"/><path d="M1840 86.4 L1856.6 69"/><path d="M1838.3 68.4 V81.6"/></g></svg>
<svg style="left:1960px;top:54px" width="56" height="50" viewBox="1960 54 56 50"><g fill="none" stroke="#c6c6ca" stroke-width="3.2" stroke-linecap="round"><path d="M1966.8 96.4 H1988.4 A18 18 0 1 0 1978.6 93.4"/><path d="M1999.4 96.4 H2009.4"/></g></svg>
<svg style="left:2060px;top:52px" width="54" height="54" viewBox="2060 52 54 54"><path d="M2105.33 76.95 L2108.38 77.70 L2108.38 79.50 L2105.33 80.25 L2104.89 83.01 L2107.56 84.66 L2107.01 86.37 L2103.87 86.14 L2102.61 88.63 L2104.63 91.03 L2103.58 92.48 L2100.67 91.29 L2098.69 93.27 L2099.88 96.18 L2098.43 97.23 L2096.03 95.21 L2093.54 96.47 L2093.77 99.61 L2092.06 100.16 L2090.41 97.49 L2087.65 97.93 L2086.90 100.98 L2085.10 100.98 L2084.35 97.93 L2081.59 97.49 L2079.94 100.16 L2078.23 99.61 L2078.46 96.47 L2075.97 95.21 L2073.57 97.23 L2072.12 96.18 L2073.31 93.27 L2071.33 91.29 L2068.42 92.48 L2067.37 91.03 L2069.39 88.63 L2068.13 86.14 L2064.99 86.37 L2064.44 84.66 L2067.11 83.01 L2066.67 80.25 L2063.62 79.50 L2063.62 77.70 L2066.67 76.95 L2067.11 74.19 L2064.44 72.54 L2064.99 70.83 L2068.13 71.06 L2069.39 68.57 L2067.37 66.17 L2068.42 64.72 L2071.33 65.91 L2073.31 63.93 L2072.12 61.02 L2073.57 59.97 L2075.97 61.99 L2078.46 60.73 L2078.23 57.59 L2079.94 57.04 L2081.59 59.71 L2084.35 59.27 L2085.10 56.22 L2086.90 56.22 L2087.65 59.27 L2090.41 59.71 L2092.06 57.04 L2093.77 57.59 L2093.54 60.73 L2096.03 61.99 L2098.43 59.97 L2099.88 61.02 L2098.69 63.93 L2100.67 65.91 L2103.58 64.72 L2104.63 66.17 L2102.61 68.57 L2103.87 71.06 L2107.01 70.83 L2107.56 72.54 L2104.89 74.19 Z" fill="#c6c6ca"/><circle cx="2086.0" cy="78.6" r="19.7" fill="#c6c6ca"/><circle cx="2086.0" cy="78.6" r="17.2" fill="#262628"/><g stroke="#c6c6ca" stroke-width="2.3" fill="none"><path d="M2089.6 78.6 H2104.0"/><path d="M2084.20 75.48 L2077.00 63.00"/><path d="M2084.20 81.72 L2077.00 94.20"/><circle cx="2086.0" cy="78.6" r="3.5"/></g></svg>
<div style="left:2163.1px;top:58.3px;width:40.6px;height:40.6px;border-radius:50%;background:#c6c6ca;"></div>
<span class="t" style="left:2176.4px;top:65.8px;font-size:25.4px;font-weight:700;color:#262628;">?</span>
<div style="left:0.00px;top:0.00px;width:320.00px;height:1440.00px;background:#000;"></div>
<div style="left:2240.00px;top:0.00px;width:320.00px;height:1440.00px;background:#000;"></div>
</div></body></html>
